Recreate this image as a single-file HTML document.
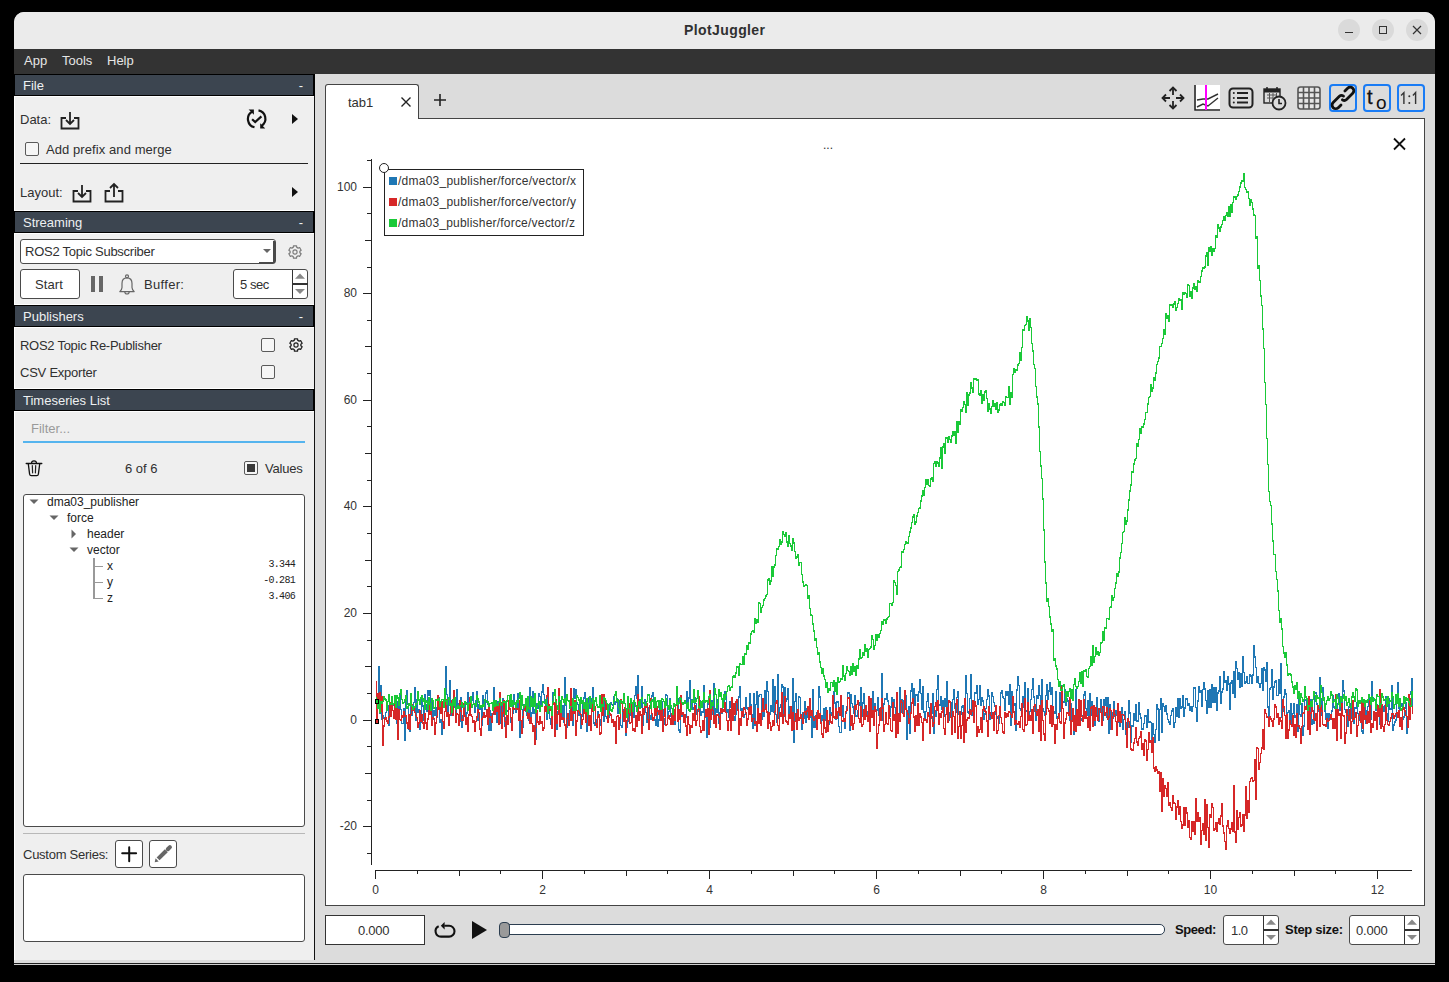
<!DOCTYPE html>
<html><head><meta charset="utf-8">
<style>
*{margin:0;padding:0;box-sizing:border-box}
html,body{width:1449px;height:982px;background:#000;overflow:hidden;font-family:"Liberation Sans",sans-serif;color:#303030}
.a{position:absolute}
.t{position:absolute;white-space:nowrap;line-height:1;font-size:13px}
.hdr{position:absolute;left:14px;width:301px;height:22px;background:#3c4550;border:1px solid #000;border-right-width:2px;color:#eef0f2;font-size:13px;line-height:21px;padding-left:8px}
.hdr span{position:absolute;right:10px;top:0}
.wl{position:absolute;left:14px;width:300px;height:1px;background:#fff}
.hdr span{position:absolute;right:10px;top:0}
.cb{position:absolute;width:14px;height:14px;border:1px solid #5a5a5a;border-radius:2px;background:#f6f6f6}
.box{position:absolute;background:#fff;border:1px solid #4a4a4a;border-radius:3px}
</style></head><body>
<!-- window -->
<div class="a" style="left:14px;top:12px;width:1421px;height:953px;background:#dcdcdc;border-radius:10px 10px 0 0;overflow:hidden">
  <div class="a" style="left:0;top:0;width:1421px;height:37px;background:#ebebeb"></div>
  <div class="a" style="left:0;top:37px;width:1421px;height:25px;background:#333"></div>
  <div class="a" style="left:0;top:62px;width:300px;height:1px;background:#8a8a8a"></div>
  <div class="a" style="left:0;top:62px;width:300px;height:886px;background:#efefef"></div>
  <div class="a" style="left:300px;top:62px;width:1px;height:886px;background:#111"></div>
  <div class="a" style="left:0;top:951px;width:1421px;height:1px;background:#1e1e1e"></div>
  <div class="a" style="left:0;top:952px;width:1421px;height:1px;background:#d0d0d0"></div>
</div>
<!-- title -->
<div class="t" style="left:684px;top:23px;font-size:14px;font-weight:bold;color:#303030;letter-spacing:0.4px">PlotJuggler</div>
<div class="a" style="left:1338px;top:19px;width:22px;height:22px;border-radius:50%;background:#dadada"></div>
<div class="a" style="left:1372px;top:19px;width:22px;height:22px;border-radius:50%;background:#dadada"></div>
<div class="a" style="left:1406px;top:19px;width:22px;height:22px;border-radius:50%;background:#dadada"></div>
<div class="a" style="left:1345px;top:32px;width:8px;height:1px;background:#333"></div>
<div class="a" style="left:1379px;top:26px;width:8px;height:8px;border:1px solid #333"></div>
<svg class="a" style="left:1411px;top:24px" width="12" height="12"><path d="M2 2L10 10M10 2L2 10" stroke="#333" stroke-width="1.2"/></svg>
<!-- menu -->
<div class="t" style="left:24px;top:54px;color:#e6e6e6">App</div>
<div class="t" style="left:62px;top:54px;color:#e6e6e6">Tools</div>
<div class="t" style="left:107px;top:54px;color:#e6e6e6">Help</div>

<!-- left dock -->
<div class="wl" style="top:96px"></div><div class="a" style="left:14px;top:96px;width:1px;height:864px;background:#fff"></div>
<div class="hdr" style="top:74px">File<span>-</span></div>
<div class="wl" style="top:210px"></div><div class="wl" style="top:233px"></div><div class="hdr" style="top:211px">Streaming<span>-</span></div>
<div class="wl" style="top:304px"></div><div class="wl" style="top:327px"></div><div class="hdr" style="top:305px">Publishers<span>-</span></div>
<div class="wl" style="top:388px"></div><div class="wl" style="top:411px"></div><div class="hdr" style="top:389px">Timeseries List</div>

<div class="t" style="left:20px;top:113px">Data:</div>
<svg class="a" style="left:60px;top:111px" width="20" height="19" viewBox="0 0 20 19" ><path d="M6 7H1.5V17.5H18.5V7H14" fill="none" stroke="#222" stroke-width="1.8"/><path d="M10 1V13M6 9L10 13L14 9" fill="none" stroke="#222" stroke-width="1.8"/></svg>
<svg class="a" style="left:246px;top:108px" width="22" height="22" viewBox="0 0 22 22" ><path d="M5.8 3.9A8.5 8.5 0 0 0 8.5 19.3" fill="none" stroke="#111" stroke-width="2.2"/><path d="M12.5 2.4A8.5 8.5 0 0 1 15.6 17.8" fill="none" stroke="#111" stroke-width="2.2"/><path d="M2.6 1.5H7.9V6.8Z" fill="#111"/><path d="M14.2 15.2V20.5H19.2Z" fill="#111"/><path d="M6.1 11.2L9.2 14.1L15.4 8.4" fill="none" stroke="#111" stroke-width="2.2"/></svg>
<svg class="a" style="left:291px;top:114px" width="8" height="10"><path d="M1 0L7 5L1 10Z" fill="#111"/></svg>
<div class="cb" style="left:25px;top:142px"></div>
<div class="t" style="left:46px;top:143px;letter-spacing:0.08px">Add prefix and merge</div>
<div class="a" style="left:20px;top:163px;width:288px;height:1px;background:#222"></div>
<div class="t" style="left:20px;top:186px">Layout:</div>
<svg class="a" style="left:72px;top:184px" width="20" height="19" viewBox="0 0 20 19" ><path d="M6 7H1.5V17.5H18.5V7H14" fill="none" stroke="#222" stroke-width="1.8"/><path d="M10 1V13M6 9L10 13L14 9" fill="none" stroke="#222" stroke-width="1.8"/></svg>
<svg class="a" style="left:104px;top:182px" width="20" height="21" viewBox="0 0 20 21" ><path d="M6 9H1.5V19.5H18.5V9H14" fill="none" stroke="#222" stroke-width="1.8"/><path d="M10 15V2M6 6L10 2L14 6" fill="none" stroke="#222" stroke-width="1.8"/></svg>
<svg class="a" style="left:291px;top:187px" width="8" height="10"><path d="M1 0L7 5L1 10Z" fill="#111"/></svg>

<!-- streaming -->
<div class="box" style="left:20px;top:239px;width:256px;height:25px"></div>
<div class="t" style="left:25px;top:245px;letter-spacing:-0.25px">ROS2 Topic Subscriber</div>
<svg class="a" style="left:263px;top:249px" width="8" height="4"><path d="M0 0H8L4 4Z" fill="#666"/></svg>
<div class="a" style="left:273px;top:241px;width:2px;height:22px;background:#4a4a4a"></div>
<div class="a" style="left:259px;top:262px;width:16px;height:1px;background:#4a4a4a"></div>
<svg class="a" style="left:286px;top:243px" width="18" height="18" viewBox="0 0 18 18" ><path d="M7.24 4.43L7.45 2.79L10.55 2.79L10.76 4.43A4.9 4.9 0 0 1 12.08 5.19L13.60 4.55L15.15 7.24L13.84 8.23A4.9 4.9 0 0 1 13.84 9.77L15.15 10.76L13.60 13.45L12.08 12.81A4.9 4.9 0 0 1 10.76 13.57L10.55 15.21L7.45 15.21L7.24 13.57A4.9 4.9 0 0 1 5.92 12.81L4.40 13.45L2.85 10.76L4.16 9.77A4.9 4.9 0 0 1 4.16 8.23L2.85 7.24L4.40 4.55L5.92 5.19A4.9 4.9 0 0 1 7.24 4.43Z" fill="none" stroke="#7a7a7a" stroke-width="1.2" stroke-linejoin="round"/><circle cx="9" cy="9" r="2.1" fill="none" stroke="#7a7a7a" stroke-width="1.1"/></svg>
<div class="box" style="left:20px;top:269px;width:60px;height:30px"></div>
<div class="t" style="left:35px;top:278px;letter-spacing:0.1px">Start</div>
<div class="a" style="left:91px;top:276px;width:4px;height:16px;background:#666"></div>
<div class="a" style="left:99px;top:276px;width:4px;height:16px;background:#666"></div>
<svg class="a" style="left:118px;top:272px" width="18" height="24" viewBox="0 0 18 24" ><circle cx="9" cy="4.3" r="1.5" fill="none" stroke="#666" stroke-width="1.2"/><path d="M9 5.8C5.5 5.8 4 8.5 4 11.5V15.5C4 17 3 18.5 1.8 19.6H16.2C15 18.5 14 17 14 15.5V11.5C14 8.5 12.5 5.8 9 5.8Z" fill="none" stroke="#666" stroke-width="1.2" stroke-linejoin="round"/><path d="M6.8 19.8A2.2 2.2 0 0 0 11.2 19.8" fill="none" stroke="#666" stroke-width="1.2"/></svg>
<div class="t" style="left:144px;top:278px;letter-spacing:0.31px">Buffer:</div>
<div class="box" style="left:233px;top:269px;width:75px;height:30px"></div>
<div class="t" style="left:240px;top:278px;letter-spacing:-0.45px">5 sec</div>

<!-- publishers -->
<div class="t" style="left:20px;top:339px;letter-spacing:-0.27px">ROS2 Topic Re-Publisher</div>
<div class="cb" style="left:261px;top:338px"></div>
<svg class="a" style="left:287px;top:336px" width="18" height="18" viewBox="0 0 18 18" ><path d="M7.24 4.43L7.45 2.79L10.55 2.79L10.76 4.43A4.9 4.9 0 0 1 12.08 5.19L13.60 4.55L15.15 7.24L13.84 8.23A4.9 4.9 0 0 1 13.84 9.77L15.15 10.76L13.60 13.45L12.08 12.81A4.9 4.9 0 0 1 10.76 13.57L10.55 15.21L7.45 15.21L7.24 13.57A4.9 4.9 0 0 1 5.92 12.81L4.40 13.45L2.85 10.76L4.16 9.77A4.9 4.9 0 0 1 4.16 8.23L2.85 7.24L4.40 4.55L5.92 5.19A4.9 4.9 0 0 1 7.24 4.43Z" fill="none" stroke="#222" stroke-width="1.3" stroke-linejoin="round"/><circle cx="9" cy="9" r="2.1" fill="none" stroke="#222" stroke-width="1.2"/></svg>
<div class="t" style="left:20px;top:366px;letter-spacing:-0.24px">CSV Exporter</div>
<div class="cb" style="left:261px;top:365px"></div>

<!-- timeseries -->
<div class="t" style="left:31px;top:422px;color:#9a9a9a">Filter...</div>
<div class="a" style="left:23px;top:441px;width:282px;height:2px;background:#55b4ee"></div>
<svg class="a" style="left:25px;top:458px" width="18" height="20" viewBox="0 0 18 20" ><path d="M1.2 5.5H16.8" stroke="#111" stroke-width="1.3" stroke-linecap="round"/><path d="M6.5 5.3A2.5 2.4 0 0 1 11.5 5.3" fill="none" stroke="#111" stroke-width="1.2"/><path d="M3.3 5.8L4.6 16.2Q4.9 17.6 6.2 17.6H11.8Q13.1 17.6 13.4 16.2L14.7 5.8" fill="none" stroke="#111" stroke-width="1.3"/><path d="M7.3 7.5L7.6 14.8M10.7 7.5L10.4 14.8" stroke="#222" stroke-width="1.2" stroke-linecap="round"/></svg>
<div class="t" style="left:125px;top:462px">6 of 6</div>
<div class="cb" style="left:244px;top:461px"></div>
<div class="a" style="left:247px;top:464px;width:8px;height:8px;background:#3a3a3a"></div>
<div class="t" style="left:265px;top:462px;letter-spacing:-0.23px">Values</div>
<div class="box" style="left:23px;top:494px;width:282px;height:333px"></div>
<div class="t" style="left:47px;top:496px;font-size:12px;color:#222">dma03_publisher</div>
<svg class="a" style="left:29px;top:499px" width="10" height="6" viewBox="0 0 10 6" ><path d="M0.5 0.5H9.5L5 5Z" fill="#666"/></svg>
<div class="t" style="left:67px;top:512px;font-size:12px;color:#222">force</div>
<svg class="a" style="left:49px;top:515px" width="10" height="6" viewBox="0 0 10 6" ><path d="M0.5 0.5H9.5L5 5Z" fill="#666"/></svg>
<div class="t" style="left:87px;top:528px;font-size:12px;color:#222">header</div>
<svg class="a" style="left:71px;top:529px" width="6" height="10" viewBox="0 0 6 10" ><path d="M0.5 0.5V9.5L5 5Z" fill="#666"/></svg>
<div class="t" style="left:87px;top:544px;font-size:12px;color:#222">vector</div>
<svg class="a" style="left:69px;top:547px" width="10" height="6" viewBox="0 0 10 6" ><path d="M0.5 0.5H9.5L5 5Z" fill="#666"/></svg>
<div class="t" style="left:107px;top:560px;font-size:12px;color:#222">x</div>
<div class="t" style="left:268.5px;top:560px;font-size:10px;letter-spacing:-0.7px;font-family:'Liberation Mono',monospace;color:#222">3.344</div>
<div class="t" style="left:107px;top:576px;font-size:12px;color:#222">y</div>
<div class="t" style="left:263.2px;top:576px;font-size:10px;letter-spacing:-0.7px;font-family:'Liberation Mono',monospace;color:#222">-0.281</div>
<div class="t" style="left:107px;top:592px;font-size:12px;color:#222">z</div>
<div class="t" style="left:268.5px;top:592px;font-size:10px;letter-spacing:-0.7px;font-family:'Liberation Mono',monospace;color:#222">3.406</div>
<div class="a" style="left:93px;top:558px;width:1.5px;height:40px;background:#999"></div>
<div class="a" style="left:93px;top:566px;width:10px;height:1px;background:#999"></div>
<div class="a" style="left:93px;top:582px;width:10px;height:1px;background:#999"></div>
<div class="a" style="left:93px;top:598px;width:10px;height:1px;background:#999"></div>
<div class="a" style="left:23px;top:833px;width:282px;height:1px;background:#b8b8b8"></div>
<div class="t" style="left:23px;top:848px;letter-spacing:-0.26px">Custom Series:</div>
<div class="box" style="left:115px;top:840px;width:28px;height:28px"></div>
<div class="box" style="left:149px;top:840px;width:28px;height:28px"></div>
<svg class="a" style="left:119px;top:844px" width="20" height="20" viewBox="0 0 20 20" ><path d="M10.2 3.2V17.3M3.2 9.3H17.1" stroke="#111" stroke-width="2" stroke-linecap="round"/></svg>
<svg class="a" style="left:153px;top:844px" width="20" height="20" viewBox="0 0 20 20" ><path d="M5.1 14.9L13.3 6.7" stroke="#666" stroke-width="4.1"/><path d="M14.8 5.2L16.9 3.1" stroke="#666" stroke-width="4.1" stroke-linecap="round"/><path d="M1.7 18.3L2.6 14.3L5.7 17.4Z" fill="#666"/></svg>
<div class="box" style="left:23px;top:874px;width:282px;height:68px"></div>

<!-- tabs -->
<div class="a" style="left:325px;top:118px;width:1100px;height:788px;background:#fff;border:1px solid #444"></div>
<div class="a" style="left:325px;top:84px;width:94px;height:35px;background:#fff;border:1px solid #444;border-bottom:none;border-radius:3px 3px 0 0"></div>
<div class="t" style="left:348px;top:96px">tab1</div>
<svg class="a" style="left:400px;top:96px" width="12" height="12"><path d="M1.5 1.5L10.5 10.5M10.5 1.5L1.5 10.5" stroke="#222" stroke-width="1.4"/></svg>
<svg class="a" style="left:433px;top:93px" width="14" height="14"><path d="M7 1V13M1 7H13" stroke="#222" stroke-width="1.6"/></svg>
<svg class="a" style="left:1160px;top:85px" width="26" height="26" viewBox="0 0 26 26" ><path d="M13 2.5V10M13 16V23.5M2.5 13H10M16 13H23.5" stroke="#222" stroke-width="1.8"/><path d="M9.5 6L13 2.5L16.5 6M9.5 20L13 23.5L16.5 20M6 9.5L2.5 13L6 16.5M20 9.5L23.5 13L20 16.5" fill="none" stroke="#222" stroke-width="1.8"/></svg>
<div class="a" style="left:1194px;top:85px;width:26px;height:26px;background:#fff"></div>
<svg class="a" style="left:1194px;top:85px" width="26" height="26" viewBox="0 0 26 26" ><path d="M1 0V25H26" fill="none" stroke="#222" stroke-width="1.6"/><path d="M3 15L9 14L14 14L24 9" fill="none" stroke="#333" stroke-width="1.4"/><path d="M3 22L9 19L14 21L24 13" fill="none" stroke="#333" stroke-width="1.4"/><path d="M12 0V25" stroke="#f0f" stroke-width="2"/></svg>
<svg class="a" style="left:1228px;top:87px" width="26" height="22" viewBox="0 0 26 22" ><rect x="1.5" y="1.5" width="23" height="19" rx="3.5" fill="none" stroke="#222" stroke-width="2"/><path d="M9 6H20M9 11H20M9 15.5H20" stroke="#222" stroke-width="2"/><circle cx="5.8" cy="6" r="1" fill="#222"/><circle cx="5.8" cy="11" r="1" fill="#222"/><circle cx="5.8" cy="15.5" r="1" fill="#222"/></svg>
<svg class="a" style="left:1263px;top:86px" width="24" height="25" viewBox="0 0 24 25" ><rect x="1" y="3" width="16" height="14" fill="none" stroke="#222" stroke-width="1.4"/><rect x="1" y="3" width="16" height="3.5" fill="#222"/><path d="M4 1V4M14 1V4" stroke="#222" stroke-width="1.5"/><path d="M4 9H14M4 12H10M6.5 7V16M10 7V14M13.5 7V11" stroke="#555" stroke-width="1"/><circle cx="16" cy="17" r="6.5" fill="#dcdcdc" stroke="#222" stroke-width="1.8"/><path d="M16 13V17.5H19" fill="none" stroke="#222" stroke-width="1.6"/></svg>
<svg class="a" style="left:1297px;top:86px" width="24" height="24" viewBox="0 0 24 24" ><rect x="1" y="1" width="22" height="22" rx="2.5" fill="#e6e6e6" stroke="#555" stroke-width="1.6"/><path d="M6.5 1V23M1 6.5H23" stroke="#555" stroke-width="1.6"/><path d="M12 1V23M1 12H23" stroke="#555" stroke-width="1.6"/><path d="M17.5 1V23M1 17.5H23" stroke="#555" stroke-width="1.6"/></svg>
<div class="a" style="left:1329px;top:84px;width:28px;height:28px;border:2px solid #1a7cf5;border-radius:4px"></div>
<div class="a" style="left:1363px;top:84px;width:28px;height:28px;border:2px solid #1a7cf5;border-radius:4px"></div>
<div class="a" style="left:1397px;top:84px;width:28px;height:28px;border:2px solid #1a7cf5;border-radius:4px"></div>
<svg class="a" style="left:1326px;top:80px" width="32" height="32" viewBox="0 0 32 32" ><path d="M18.9 11L21.65 8.25A3.6 3.6 0 0 1 26.75 13.35L20.5 19.6Q18.6 21.4 16.4 19.8" fill="none" stroke="#111" stroke-width="2.8" stroke-linecap="round"/><path d="M15 24.9L12.25 27.65A3.6 3.6 0 0 1 7.15 22.55L13.4 16.3Q15.3 14.5 17.5 16.1" fill="none" stroke="#111" stroke-width="2.8" stroke-linecap="round"/></svg>
<svg class="a" style="left:1363px;top:84px" width="28" height="28" viewBox="0 0 28 28" ><text x="4" y="19.5" font-family="Liberation Sans" font-size="20" fill="#111" stroke="#111" stroke-width="0.35">t</text><text x="13" y="24.5" font-family="Liberation Sans" font-size="19" fill="#111">o</text></svg>
<svg class="a" style="left:1397px;top:84px" width="28" height="28" viewBox="0 0 28 28" ><path d="M4.1 11.4L6.9 8.6V20M15.9 11.4L18.6 8.6V20" fill="none" stroke="#333" stroke-width="1.4"/><circle cx="12.3" cy="12.3" r="1" fill="#333"/><circle cx="12.3" cy="19" r="1" fill="#333"/></svg>

<!-- plot -->
<svg class="a" style="left:326px;top:119px" width="1098" height="786"><path d="M45.5 40V746" stroke="#222" stroke-width="1"/>
<path d="M49 751.5H1086" stroke="#222" stroke-width="1"/>
<path d="M41 734.5H45" stroke="#222" stroke-width="1"/>
<path d="M37 707.5H45" stroke="#222" stroke-width="1"/>
<path d="M41 681.5H45" stroke="#222" stroke-width="1"/>
<path d="M39 654.5H45" stroke="#222" stroke-width="1"/>
<path d="M41 627.5H45" stroke="#222" stroke-width="1"/>
<path d="M37 601.5H45" stroke="#222" stroke-width="1"/>
<path d="M41 574.5H45" stroke="#222" stroke-width="1"/>
<path d="M39 547.5H45" stroke="#222" stroke-width="1"/>
<path d="M41 521.5H45" stroke="#222" stroke-width="1"/>
<path d="M37 494.5H45" stroke="#222" stroke-width="1"/>
<path d="M41 467.5H45" stroke="#222" stroke-width="1"/>
<path d="M39 441.5H45" stroke="#222" stroke-width="1"/>
<path d="M41 414.5H45" stroke="#222" stroke-width="1"/>
<path d="M37 387.5H45" stroke="#222" stroke-width="1"/>
<path d="M41 361.5H45" stroke="#222" stroke-width="1"/>
<path d="M39 334.5H45" stroke="#222" stroke-width="1"/>
<path d="M41 307.5H45" stroke="#222" stroke-width="1"/>
<path d="M37 281.5H45" stroke="#222" stroke-width="1"/>
<path d="M41 254.5H45" stroke="#222" stroke-width="1"/>
<path d="M39 227.5H45" stroke="#222" stroke-width="1"/>
<path d="M41 201.5H45" stroke="#222" stroke-width="1"/>
<path d="M37 174.5H45" stroke="#222" stroke-width="1"/>
<path d="M41 148.5H45" stroke="#222" stroke-width="1"/>
<path d="M39 121.5H45" stroke="#222" stroke-width="1"/>
<path d="M41 94.5H45" stroke="#222" stroke-width="1"/>
<path d="M37 68.5H45" stroke="#222" stroke-width="1"/>
<path d="M41 41.5H45" stroke="#222" stroke-width="1"/>
<path d="M49.5 751V760" stroke="#222" stroke-width="1"/>
<path d="M91.5 751V755" stroke="#222" stroke-width="1"/>
<path d="M133.5 751V757" stroke="#222" stroke-width="1"/>
<path d="M174.5 751V755" stroke="#222" stroke-width="1"/>
<path d="M216.5 751V760" stroke="#222" stroke-width="1"/>
<path d="M258.5 751V755" stroke="#222" stroke-width="1"/>
<path d="M300.5 751V757" stroke="#222" stroke-width="1"/>
<path d="M341.5 751V755" stroke="#222" stroke-width="1"/>
<path d="M383.5 751V760" stroke="#222" stroke-width="1"/>
<path d="M425.5 751V755" stroke="#222" stroke-width="1"/>
<path d="M467.5 751V757" stroke="#222" stroke-width="1"/>
<path d="M508.5 751V755" stroke="#222" stroke-width="1"/>
<path d="M550.5 751V760" stroke="#222" stroke-width="1"/>
<path d="M592.5 751V755" stroke="#222" stroke-width="1"/>
<path d="M634.5 751V757" stroke="#222" stroke-width="1"/>
<path d="M675.5 751V755" stroke="#222" stroke-width="1"/>
<path d="M717.5 751V760" stroke="#222" stroke-width="1"/>
<path d="M759.5 751V755" stroke="#222" stroke-width="1"/>
<path d="M801.5 751V757" stroke="#222" stroke-width="1"/>
<path d="M842.5 751V755" stroke="#222" stroke-width="1"/>
<path d="M884.5 751V760" stroke="#222" stroke-width="1"/>
<path d="M926.5 751V755" stroke="#222" stroke-width="1"/>
<path d="M968.5 751V757" stroke="#222" stroke-width="1"/>
<path d="M1009.5 751V755" stroke="#222" stroke-width="1"/>
<path d="M1051.5 751V760" stroke="#222" stroke-width="1"/>
<polyline points="49.5,596.1 50.5,596.1 50.5,592.4 51.5,592.4 51.5,589.4 52.5,589.4 52.5,547.6 53.5,547.6 53.5,594.7 54.5,594.7 54.5,566.6 55.5,566.6 55.5,600.0 56.5,600.0 56.5,596.7 57.5,596.7 57.5,599.1 58.5,599.1 58.5,599.1 59.5,599.1 59.5,593.3 60.5,593.3 60.5,584.1 61.5,584.1 61.5,586.6 62.5,586.6 62.5,606.6 63.5,606.6 63.5,583.6 64.5,583.6 64.5,587.5 65.5,587.5 65.5,582.0 66.5,582.0 66.5,584.3 67.5,584.3 67.5,586.6 68.5,586.6 68.5,592.8 69.5,592.8 69.5,586.8 70.5,586.8 70.5,604.7 71.5,604.7 71.5,583.2 72.5,583.2 72.5,591.0 73.5,591.0 73.5,575.2 74.5,575.2 74.5,590.6 75.5,590.6 75.5,604.4 76.5,604.4 76.5,604.4 77.5,604.4 77.5,589.5 78.5,589.5 78.5,621.0 79.5,621.0 79.5,579.1 80.5,579.1 80.5,572.2 81.5,572.2 81.5,585.3 82.5,585.3 82.5,609.9 83.5,609.9 83.5,612.4 84.5,612.4 84.5,576.6 85.5,576.6 85.5,596.3 86.5,596.3 86.5,590.0 87.5,590.0 87.5,583.5 88.5,583.5 88.5,568.6 89.5,568.6 89.5,601.3 90.5,601.3 90.5,580.5 91.5,580.5 91.5,593.3 92.5,593.3 92.5,590.9 93.5,590.9 93.5,610.6 94.5,610.6 94.5,602.9 95.5,602.9 95.5,577.3 96.5,577.3 96.5,587.1 97.5,587.1 97.5,601.4 98.5,601.4 98.5,575.3 99.5,575.3 99.5,585.7 100.5,585.7 100.5,592.5 101.5,592.5 101.5,572.2 102.5,572.2 102.5,576.4 103.5,576.4 103.5,571.3 104.5,571.3 104.5,593.2 105.5,593.2 105.5,583.8 106.5,583.8 106.5,600.2 107.5,600.2 107.5,591.3 108.5,591.3 108.5,596.3 109.5,596.3 109.5,589.1 110.5,589.1 110.5,598.3 111.5,598.3 111.5,588.9 112.5,588.9 112.5,579.2 113.5,579.2 113.5,603.0 114.5,603.0 114.5,600.8 115.5,600.8 115.5,614.9 116.5,614.9 116.5,588.4 117.5,588.4 117.5,583.6 118.5,583.6 118.5,574.1 119.5,574.1 119.5,547.5 120.5,547.5 120.5,575.6 121.5,575.6 121.5,595.4 122.5,595.4 122.5,580.3 123.5,580.3 123.5,561.5 124.5,561.5 124.5,596.7 125.5,596.7 125.5,583.5 126.5,583.5 126.5,586.0 127.5,586.0 127.5,585.3 128.5,585.3 128.5,588.5 129.5,588.5 129.5,595.2 130.5,595.2 130.5,570.9 131.5,570.9 131.5,587.5 132.5,587.5 132.5,584.4 133.5,584.4 133.5,602.5 134.5,602.5 134.5,578.6 135.5,578.6 135.5,608.0 136.5,608.0 136.5,596.7 137.5,596.7 137.5,590.1 138.5,590.1 138.5,582.3 139.5,582.3 139.5,598.9 140.5,598.9 140.5,594.0 141.5,594.0 141.5,573.5 142.5,573.5 142.5,587.1 143.5,587.1 143.5,585.0 144.5,585.0 144.5,579.4 145.5,579.4 145.5,581.6 146.5,581.6 146.5,574.2 147.5,574.2 147.5,584.9 148.5,584.9 148.5,593.7 149.5,593.7 149.5,581.4 150.5,581.4 150.5,572.8 151.5,572.8 151.5,601.5 152.5,601.5 152.5,585.9 153.5,585.9 153.5,590.3 154.5,590.3 154.5,587.4 155.5,587.4 155.5,605.8 156.5,605.8 156.5,577.2 157.5,577.2 157.5,584.2 158.5,584.2 158.5,590.3 159.5,590.3 159.5,574.1 160.5,574.1 160.5,572.0 161.5,572.0 161.5,585.7 162.5,585.7 162.5,611.0 163.5,611.0 163.5,592.0 164.5,592.0 164.5,611.3 165.5,611.3 165.5,595.0 166.5,595.0 166.5,595.0 167.5,595.0 167.5,569.1 168.5,569.1 168.5,589.8 169.5,589.8 169.5,589.6 170.5,589.6 170.5,603.0 171.5,603.0 171.5,583.1 172.5,583.1 172.5,584.8 173.5,584.8 173.5,604.7 174.5,604.7 174.5,584.3 175.5,584.3 175.5,600.1 176.5,600.1 176.5,580.0 177.5,580.0 177.5,596.9 178.5,596.9 178.5,606.8 179.5,606.8 179.5,599.2 180.5,599.2 180.5,592.7 181.5,592.7 181.5,591.5 182.5,591.5 182.5,589.1 183.5,589.1 183.5,589.7 184.5,589.7 184.5,603.0 185.5,603.0 185.5,602.7 186.5,602.7 186.5,594.5 187.5,594.5 187.5,576.1 188.5,576.1 188.5,584.3 189.5,584.3 189.5,593.3 190.5,593.3 190.5,590.6 191.5,590.6 191.5,575.1 192.5,575.1 192.5,597.3 193.5,597.3 193.5,618.6 194.5,618.6 194.5,576.5 195.5,576.5 195.5,590.7 196.5,590.7 196.5,607.8 197.5,607.8 197.5,585.4 198.5,585.4 198.5,585.5 199.5,585.5 199.5,591.9 200.5,591.9 200.5,596.2 201.5,596.2 201.5,585.5 202.5,585.5 202.5,600.8 203.5,600.8 203.5,569.0 204.5,569.0 204.5,597.2 205.5,597.2 205.5,594.1 206.5,594.1 206.5,572.7 207.5,572.7 207.5,594.3 208.5,594.3 208.5,590.5 209.5,590.5 209.5,620.3 210.5,620.3 210.5,584.9 211.5,584.9 211.5,589.5 212.5,589.5 212.5,574.7 213.5,574.7 213.5,577.6 214.5,577.6 214.5,587.3 215.5,587.3 215.5,572.9 216.5,572.9 216.5,565.7 217.5,565.7 217.5,575.4 218.5,575.4 218.5,584.6 219.5,584.6 219.5,591.3 220.5,591.3 220.5,600.4 221.5,600.4 221.5,568.7 222.5,568.7 222.5,587.8 223.5,587.8 223.5,599.5 224.5,599.5 224.5,605.2 225.5,605.2 225.5,605.5 226.5,605.5 226.5,574.2 227.5,574.2 227.5,584.4 228.5,584.4 228.5,596.2 229.5,596.2 229.5,600.3 230.5,600.3 230.5,610.1 231.5,610.1 231.5,592.9 232.5,592.9 232.5,592.7 233.5,592.7 233.5,581.6 234.5,581.6 234.5,591.8 235.5,591.8 235.5,598.9 236.5,598.9 236.5,586.3 237.5,586.3 237.5,602.9 238.5,602.9 238.5,558.7 239.5,558.7 239.5,586.4 240.5,586.4 240.5,608.7 241.5,608.7 241.5,599.6 242.5,599.6 242.5,605.9 243.5,605.9 243.5,591.6 244.5,591.6 244.5,577.0 245.5,577.0 245.5,584.4 246.5,584.4 246.5,606.7 247.5,606.7 247.5,569.8 248.5,569.8 248.5,579.5 249.5,579.5 249.5,571.1 250.5,571.1 250.5,584.1 251.5,584.1 251.5,585.4 252.5,585.4 252.5,596.4 253.5,596.4 253.5,580.9 254.5,580.9 254.5,608.8 255.5,608.8 255.5,597.1 256.5,597.1 256.5,584.8 257.5,584.8 257.5,579.1 258.5,579.1 258.5,573.5 259.5,573.5 259.5,591.4 260.5,591.4 260.5,611.8 261.5,611.8 261.5,588.2 262.5,588.2 262.5,578.7 263.5,578.7 263.5,589.4 264.5,589.4 264.5,584.3 265.5,584.3 265.5,580.1 266.5,580.1 266.5,569.2 267.5,569.2 267.5,603.8 268.5,603.8 268.5,606.4 269.5,606.4 269.5,603.5 270.5,603.5 270.5,600.9 271.5,600.9 271.5,592.4 272.5,592.4 272.5,595.3 273.5,595.3 273.5,601.2 274.5,601.2 274.5,606.3 275.5,606.3 275.5,593.2 276.5,593.2 276.5,585.7 277.5,585.7 277.5,602.5 278.5,602.5 278.5,579.9 279.5,579.9 279.5,597.6 280.5,597.6 280.5,599.5 281.5,599.5 281.5,599.3 282.5,599.3 282.5,597.9 283.5,597.9 283.5,585.0 284.5,585.0 284.5,583.9 285.5,583.9 285.5,585.6 286.5,585.6 286.5,586.0 287.5,586.0 287.5,577.7 288.5,577.7 288.5,585.2 289.5,585.2 289.5,583.1 290.5,583.1 290.5,579.7 291.5,579.7 291.5,594.1 292.5,594.1 292.5,581.8 293.5,581.8 293.5,592.9 294.5,592.9 294.5,606.4 295.5,606.4 295.5,608.7 296.5,608.7 296.5,590.4 297.5,590.4 297.5,601.4 298.5,601.4 298.5,592.9 299.5,592.9 299.5,616.5 300.5,616.5 300.5,608.3 301.5,608.3 301.5,602.5 302.5,602.5 302.5,588.5 303.5,588.5 303.5,587.4 304.5,587.4 304.5,596.2 305.5,596.2 305.5,589.8 306.5,589.8 306.5,587.5 307.5,587.5 307.5,597.9 308.5,597.9 308.5,576.4 309.5,576.4 309.5,568.1 310.5,568.1 310.5,579.0 311.5,579.0 311.5,556.7 312.5,556.7 312.5,589.3 313.5,589.3 313.5,580.5 314.5,580.5 314.5,588.0 315.5,588.0 315.5,567.8 316.5,567.8 316.5,606.4 317.5,606.4 317.5,594.5 318.5,594.5 318.5,580.6 319.5,580.6 319.5,593.6 320.5,593.6 320.5,603.7 321.5,603.7 321.5,599.4 322.5,599.4 322.5,589.1 323.5,589.1 323.5,596.9 324.5,596.9 324.5,599.9 325.5,599.9 325.5,576.8 326.5,576.8 326.5,574.2 327.5,574.2 327.5,583.6 328.5,583.6 328.5,601.0 329.5,601.0 329.5,606.5 330.5,606.5 330.5,591.6 331.5,591.6 331.5,606.8 332.5,606.8 332.5,601.2 333.5,601.2 333.5,589.3 334.5,589.3 334.5,581.9 335.5,581.9 335.5,583.0 336.5,583.0 336.5,591.0 337.5,591.0 337.5,605.7 338.5,605.7 338.5,599.4 339.5,599.4 339.5,575.7 340.5,575.7 340.5,576.5 341.5,576.5 341.5,599.1 342.5,599.1 342.5,592.3 343.5,592.3 343.5,579.7 344.5,579.7 344.5,597.6 345.5,597.6 345.5,605.3 346.5,605.3 346.5,599.0 347.5,599.0 347.5,591.3 348.5,591.3 348.5,605.0 349.5,605.0 349.5,585.9 350.5,585.9 350.5,583.6 351.5,583.6 351.5,580.0 352.5,580.0 352.5,611.1 353.5,611.1 353.5,613.7 354.5,613.7 354.5,589.7 355.5,589.7 355.5,596.8 356.5,596.8 356.5,595.2 357.5,595.2 357.5,600.6 358.5,600.6 358.5,603.4 359.5,603.4 359.5,597.8 360.5,597.8 360.5,572.9 361.5,572.9 361.5,584.5 362.5,584.5 362.5,578.9 363.5,578.9 363.5,561.3 364.5,561.3 364.5,589.2 365.5,589.2 365.5,581.0 366.5,581.0 366.5,590.6 367.5,590.6 367.5,589.1 368.5,589.1 368.5,578.9 369.5,578.9 369.5,584.7 370.5,584.7 370.5,594.8 371.5,594.8 371.5,592.1 372.5,592.1 372.5,580.5 373.5,580.5 373.5,581.9 374.5,581.9 374.5,596.5 375.5,596.5 375.5,592.8 376.5,592.8 376.5,593.6 377.5,593.6 377.5,566.7 378.5,566.7 378.5,598.4 379.5,598.4 379.5,591.3 380.5,591.3 380.5,618.1 381.5,618.1 381.5,585.0 382.5,585.0 382.5,582.4 383.5,582.4 383.5,608.4 384.5,608.4 384.5,589.4 385.5,589.4 385.5,581.5 386.5,581.5 386.5,594.9 387.5,594.9 387.5,564.5 388.5,564.5 388.5,595.0 389.5,595.0 389.5,590.2 390.5,590.2 390.5,593.0 391.5,593.0 391.5,581.1 392.5,581.1 392.5,604.5 393.5,604.5 393.5,593.4 394.5,593.4 394.5,589.7 395.5,589.7 395.5,593.9 396.5,593.9 396.5,580.6 397.5,580.6 397.5,588.4 398.5,588.4 398.5,573.2 399.5,573.2 399.5,577.6 400.5,577.6 400.5,593.0 401.5,593.0 401.5,591.0 402.5,591.0 402.5,597.8 403.5,597.8 403.5,582.3 404.5,582.3 404.5,588.4 405.5,588.4 405.5,582.0 406.5,582.0 406.5,592.3 407.5,592.3 407.5,598.1 408.5,598.1 408.5,601.2 409.5,601.2 409.5,595.7 410.5,595.7 410.5,580.7 411.5,580.7 411.5,591.7 412.5,591.7 412.5,577.9 413.5,577.9 413.5,568.1 414.5,568.1 414.5,591.2 415.5,591.2 415.5,590.1 416.5,590.1 416.5,597.4 417.5,597.4 417.5,598.2 418.5,598.2 418.5,595.5 419.5,595.5 419.5,579.1 420.5,579.1 420.5,589.0 421.5,589.0 421.5,589.8 422.5,589.8 422.5,593.5 423.5,593.5 423.5,574.5 424.5,574.5 424.5,586.1 425.5,586.1 425.5,595.9 426.5,595.9 426.5,609.7 427.5,609.7 427.5,575.0 428.5,575.0 428.5,606.6 429.5,606.6 429.5,585.6 430.5,585.6 430.5,572.8 431.5,572.8 431.5,603.3 432.5,603.3 432.5,576.9 433.5,576.9 433.5,575.7 434.5,575.7 434.5,575.5 435.5,575.5 435.5,599.9 436.5,599.9 436.5,589.2 437.5,589.2 437.5,597.3 438.5,597.3 438.5,572.0 439.5,572.0 439.5,589.6 440.5,589.6 440.5,562.6 441.5,562.6 441.5,572.3 442.5,572.3 442.5,599.9 443.5,599.9 443.5,595.0 444.5,595.0 444.5,586.7 445.5,586.7 445.5,592.7 446.5,592.7 446.5,560.7 447.5,560.7 447.5,593.3 448.5,593.3 448.5,568.1 449.5,568.1 449.5,595.7 450.5,595.7 450.5,603.0 451.5,603.0 451.5,556.2 452.5,556.2 452.5,599.2 453.5,599.2 453.5,588.3 454.5,588.3 454.5,586.1 455.5,586.1 455.5,566.1 456.5,566.1 456.5,568.1 457.5,568.1 457.5,597.3 458.5,597.3 458.5,568.8 459.5,568.8 459.5,582.4 460.5,582.4 460.5,579.9 461.5,579.9 461.5,569.7 462.5,569.7 462.5,599.1 463.5,599.1 463.5,587.8 464.5,587.8 464.5,588.0 465.5,588.0 465.5,598.3 466.5,598.3 466.5,560.2 467.5,560.2 467.5,623.4 468.5,623.4 468.5,582.7 469.5,582.7 469.5,575.1 470.5,575.1 470.5,595.0 471.5,595.0 471.5,592.4 472.5,592.4 472.5,577.8 473.5,577.8 473.5,578.6 474.5,578.6 474.5,597.9 475.5,597.9 475.5,610.6 476.5,610.6 476.5,593.7 477.5,593.7 477.5,598.9 478.5,598.9 478.5,582.8 479.5,582.8 479.5,603.5 480.5,603.5 480.5,590.2 481.5,590.2 481.5,597.9 482.5,597.9 482.5,596.1 483.5,596.1 483.5,598.6 484.5,598.6 484.5,593.6 485.5,593.6 485.5,617.9 486.5,617.9 486.5,570.4 487.5,570.4 487.5,607.9 488.5,607.9 488.5,598.2 489.5,598.2 489.5,608.6 490.5,608.6 490.5,594.2 491.5,594.2 491.5,597.0 492.5,597.0 492.5,567.5 493.5,567.5 493.5,578.0 494.5,578.0 494.5,603.7 495.5,603.7 495.5,597.0 496.5,597.0 496.5,601.0 497.5,601.0 497.5,589.8 498.5,589.8 498.5,601.4 499.5,601.4 499.5,589.0 500.5,589.0 500.5,592.5 501.5,592.5 501.5,606.6 502.5,606.6 502.5,605.2 503.5,605.2 503.5,588.8 504.5,588.8 504.5,594.2 505.5,594.2 505.5,596.4 506.5,596.4 506.5,592.4 507.5,592.4 507.5,572.4 508.5,572.4 508.5,583.8 509.5,583.8 509.5,600.2 510.5,600.2 510.5,582.4 511.5,582.4 511.5,583.1 512.5,583.1 512.5,607.5 513.5,607.5 513.5,613.5 514.5,613.5 514.5,613.5 515.5,613.5 515.5,597.0 516.5,597.0 516.5,587.1 517.5,587.1 517.5,601.0 518.5,601.0 518.5,609.7 519.5,609.7 519.5,593.8 520.5,593.8 520.5,588.0 521.5,588.0 521.5,574.0 522.5,574.0 522.5,573.6 523.5,573.6 523.5,610.8 524.5,610.8 524.5,575.7 525.5,575.7 525.5,584.3 526.5,584.3 526.5,588.2 527.5,588.2 527.5,594.0 528.5,594.0 528.5,577.0 529.5,577.0 529.5,597.3 530.5,597.3 530.5,597.2 531.5,597.2 531.5,591.5 532.5,591.5 532.5,583.8 533.5,583.8 533.5,586.4 534.5,586.4 534.5,569.1 535.5,569.1 535.5,597.0 536.5,597.0 536.5,584.2 537.5,584.2 537.5,574.8 538.5,574.8 538.5,589.2 539.5,589.2 539.5,594.9 540.5,594.9 540.5,593.2 541.5,593.2 541.5,596.0 542.5,596.0 542.5,601.8 543.5,601.8 543.5,583.1 544.5,583.1 544.5,590.7 545.5,590.7 545.5,591.3 546.5,591.3 546.5,572.4 547.5,572.4 547.5,600.1 548.5,600.1 548.5,584.4 549.5,584.4 549.5,590.6 550.5,590.6 550.5,591.0 551.5,591.0 551.5,578.6 552.5,578.6 552.5,596.4 553.5,596.4 553.5,597.9 554.5,597.9 554.5,589.0 555.5,589.0 555.5,555.2 556.5,555.2 556.5,601.7 557.5,601.7 557.5,585.0 558.5,585.0 558.5,579.4 559.5,579.4 559.5,579.9 560.5,579.9 560.5,574.3 561.5,574.3 561.5,582.0 562.5,582.0 562.5,592.7 563.5,592.7 563.5,597.0 564.5,597.0 564.5,587.9 565.5,587.9 565.5,579.0 566.5,579.0 566.5,582.5 567.5,582.5 567.5,581.1 568.5,581.1 568.5,588.4 569.5,588.4 569.5,596.0 570.5,596.0 570.5,584.6 571.5,584.6 571.5,594.5 572.5,594.5 572.5,600.8 573.5,600.8 573.5,568.5 574.5,568.5 574.5,592.8 575.5,592.8 575.5,580.8 576.5,580.8 576.5,581.9 577.5,581.9 577.5,594.5 578.5,594.5 578.5,581.1 579.5,581.1 579.5,576.6 580.5,576.6 580.5,620.5 581.5,620.5 581.5,594.8 582.5,594.8 582.5,587.7 583.5,587.7 583.5,614.1 584.5,614.1 584.5,572.2 585.5,572.2 585.5,565.0 586.5,565.0 586.5,580.4 587.5,580.4 587.5,570.1 588.5,570.1 588.5,586.5 589.5,586.5 589.5,575.9 590.5,575.9 590.5,575.6 591.5,575.6 591.5,582.1 592.5,582.1 592.5,572.8 593.5,572.8 593.5,561.1 594.5,561.1 594.5,574.3 595.5,574.3 595.5,590.1 596.5,590.1 596.5,567.3 597.5,567.3 597.5,592.9 598.5,592.9 598.5,601.2 599.5,601.2 599.5,592.5 600.5,592.5 600.5,582.4 601.5,582.4 601.5,574.9 602.5,574.9 602.5,588.3 603.5,588.3 603.5,601.0 604.5,601.0 604.5,599.1 605.5,599.1 605.5,593.9 606.5,593.9 606.5,574.9 607.5,574.9 607.5,613.8 608.5,613.8 608.5,591.7 609.5,591.7 609.5,597.5 610.5,597.5 610.5,570.3 611.5,570.3 611.5,556.5 612.5,556.5 612.5,586.0 613.5,586.0 613.5,585.9 614.5,585.9 614.5,578.0 615.5,578.0 615.5,590.3 616.5,590.3 616.5,581.7 617.5,581.7 617.5,597.2 618.5,597.2 618.5,579.8 619.5,579.8 619.5,587.5 620.5,587.5 620.5,562.4 621.5,562.4 621.5,587.7 622.5,587.7 622.5,601.6 623.5,601.6 623.5,593.5 624.5,593.5 624.5,584.0 625.5,584.0 625.5,599.5 626.5,599.5 626.5,580.3 627.5,580.3 627.5,570.5 628.5,570.5 628.5,589.0 629.5,589.0 629.5,592.8 630.5,592.8 630.5,578.4 631.5,578.4 631.5,572.5 632.5,572.5 632.5,595.1 633.5,595.1 633.5,598.5 634.5,598.5 634.5,595.0 635.5,595.0 635.5,587.8 636.5,587.8 636.5,586.7 637.5,586.7 637.5,604.6 638.5,604.6 638.5,595.3 639.5,595.3 639.5,556.8 640.5,556.8 640.5,574.5 641.5,574.5 641.5,593.1 642.5,593.1 642.5,594.2 643.5,594.2 643.5,579.3 644.5,579.3 644.5,555.9 645.5,555.9 645.5,596.4 646.5,596.4 646.5,582.3 647.5,582.3 647.5,594.8 648.5,594.8 648.5,573.4 649.5,573.4 649.5,574.6 650.5,574.6 650.5,566.5 651.5,566.5 651.5,584.8 652.5,584.8 652.5,580.7 653.5,580.7 653.5,566.6 654.5,566.6 654.5,586.6 655.5,586.6 655.5,579.0 656.5,579.0 656.5,582.2 657.5,582.2 657.5,599.9 658.5,599.9 658.5,595.1 659.5,595.1 659.5,589.7 660.5,589.7 660.5,580.6 661.5,580.6 661.5,571.1 662.5,571.1 662.5,576.8 663.5,576.8 663.5,599.8 664.5,599.8 664.5,597.6 665.5,597.6 665.5,573.5 666.5,573.5 666.5,577.6 667.5,577.6 667.5,583.4 668.5,583.4 668.5,587.6 669.5,587.6 669.5,595.1 670.5,595.1 670.5,597.7 671.5,597.7 671.5,599.2 672.5,599.2 672.5,604.1 673.5,604.1 673.5,590.2 674.5,590.2 674.5,574.1 675.5,574.1 675.5,571.9 676.5,571.9 676.5,577.9 677.5,577.9 677.5,579.6 678.5,579.6 678.5,590.9 679.5,590.9 679.5,573.2 680.5,573.2 680.5,575.8 681.5,575.8 681.5,572.6 682.5,572.6 682.5,584.8 683.5,584.8 683.5,565.8 684.5,565.8 684.5,606.3 685.5,606.3 685.5,572.8 686.5,572.8 686.5,579.0 687.5,579.0 687.5,586.0 688.5,586.0 688.5,584.5 689.5,584.5 689.5,611.6 690.5,611.6 690.5,571.0 691.5,571.0 691.5,558.0 692.5,558.0 692.5,566.4 693.5,566.4 693.5,589.7 694.5,589.7 694.5,591.2 695.5,591.2 695.5,591.7 696.5,591.7 696.5,577.9 697.5,577.9 697.5,588.4 698.5,588.4 698.5,563.3 699.5,563.3 699.5,591.4 700.5,591.4 700.5,592.7 701.5,592.7 701.5,570.0 702.5,570.0 702.5,594.8 703.5,594.8 703.5,592.6 704.5,592.6 704.5,580.6 705.5,580.6 705.5,570.5 706.5,570.5 706.5,559.8 707.5,559.8 707.5,578.0 708.5,578.0 708.5,592.4 709.5,592.4 709.5,601.5 710.5,601.5 710.5,577.0 711.5,577.0 711.5,579.3 712.5,579.3 712.5,566.7 713.5,566.7 713.5,576.3 714.5,576.3 714.5,587.4 715.5,587.4 715.5,560.3 716.5,560.3 716.5,590.1 717.5,590.1 717.5,592.5 718.5,592.5 718.5,596.1 719.5,596.1 719.5,576.7 720.5,576.7 720.5,565.9 721.5,565.9 721.5,580.2 722.5,580.2 722.5,572.1 723.5,572.1 723.5,564.2 724.5,564.2 724.5,575.4 725.5,575.4 725.5,568.6 726.5,568.6 726.5,605.2 727.5,605.2 727.5,592.4 728.5,592.4 728.5,594.0 729.5,594.0 729.5,572.3 730.5,572.3 730.5,599.7 731.5,599.7 731.5,597.5 732.5,597.5 732.5,594.3 733.5,594.3 733.5,573.9 734.5,573.9 734.5,592.1 735.5,592.1 735.5,567.0 736.5,567.0 736.5,583.7 737.5,583.7 737.5,583.0 738.5,583.0 738.5,570.8 739.5,570.8 739.5,586.3 740.5,586.3 740.5,579.9 741.5,579.9 741.5,582.0 742.5,582.0 742.5,594.6 743.5,594.6 743.5,600.8 744.5,600.8 744.5,584.6 745.5,584.6 745.5,601.0 746.5,601.0 746.5,598.1 747.5,598.1 747.5,615.0 748.5,615.0 748.5,604.8 749.5,604.8 749.5,571.0 750.5,571.0 750.5,602.3 751.5,602.3 751.5,592.0 752.5,592.0 752.5,583.7 753.5,583.7 753.5,586.3 754.5,586.3 754.5,599.5 755.5,599.5 755.5,601.7 756.5,601.7 756.5,596.5 757.5,596.5 757.5,576.1 758.5,576.1 758.5,572.9 759.5,572.9 759.5,589.7 760.5,589.7 760.5,596.5 761.5,596.5 761.5,582.2 762.5,582.2 762.5,599.7 763.5,599.7 763.5,574.6 764.5,574.6 764.5,595.9 765.5,595.9 765.5,582.5 766.5,582.5 766.5,604.8 767.5,604.8 767.5,602.1 768.5,602.1 768.5,606.6 769.5,606.6 769.5,596.1 770.5,596.1 770.5,578.4 771.5,578.4 771.5,596.7 772.5,596.7 772.5,602.3 773.5,602.3 773.5,591.5 774.5,591.5 774.5,580.8 775.5,580.8 775.5,599.7 776.5,599.7 776.5,600.9 777.5,600.9 777.5,580.4 778.5,580.4 778.5,586.4 779.5,586.4 779.5,578.8 780.5,578.8 780.5,598.5 781.5,598.5 781.5,579.2 782.5,579.2 782.5,614.5 783.5,614.5 783.5,585.6 784.5,585.6 784.5,610.5 785.5,610.5 785.5,593.8 786.5,593.8 786.5,599.4 787.5,599.4 787.5,583.1 788.5,583.1 788.5,597.2 789.5,597.2 789.5,591.4 790.5,591.4 790.5,596.3 791.5,596.3 791.5,599.8 792.5,599.8 792.5,603.3 793.5,603.3 793.5,607.4 794.5,607.4 794.5,598.3 795.5,598.3 795.5,589.0 796.5,589.0 796.5,610.4 797.5,610.4 797.5,600.3 798.5,600.3 798.5,593.0 799.5,593.0 799.5,615.0 800.5,615.0 800.5,603.4 801.5,603.4 801.5,608.4 802.5,608.4 802.5,582.2 803.5,582.2 803.5,594.2 804.5,594.2 804.5,623.4 805.5,623.4 805.5,607.1 806.5,607.1 806.5,607.1 807.5,607.1 807.5,594.3 808.5,594.3 808.5,600.8 809.5,600.8 809.5,586.1 810.5,586.1 810.5,602.1 811.5,602.1 811.5,601.9 812.5,601.9 812.5,584.1 813.5,584.1 813.5,594.9 814.5,594.9 814.5,599.0 815.5,599.0 815.5,610.4 816.5,610.4 816.5,610.1 817.5,610.1 817.5,604.5 818.5,604.5 818.5,597.0 819.5,597.0 819.5,597.2 820.5,597.2 820.5,608.2 821.5,608.2 821.5,590.9 822.5,590.9 822.5,603.5 823.5,603.5 823.5,602.8 824.5,602.8 824.5,603.7 825.5,603.7 825.5,624.9 826.5,624.9 826.5,605.0 827.5,605.0 827.5,615.5 828.5,615.5 828.5,623.0 829.5,623.0 829.5,610.6 830.5,610.6 830.5,586.1 831.5,586.1 831.5,590.2 832.5,590.2 832.5,621.1 833.5,621.1 833.5,590.7 834.5,590.7 834.5,579.9 835.5,579.9 835.5,613.4 836.5,613.4 836.5,585.1 837.5,585.1 837.5,587.5 838.5,587.5 838.5,592.2 839.5,592.2 839.5,586.5 840.5,586.5 840.5,595.1 841.5,595.1 841.5,600.5 842.5,600.5 842.5,603.1 843.5,603.1 843.5,605.5 844.5,605.5 844.5,596.4 845.5,596.4 845.5,591.8 846.5,591.8 846.5,589.8 847.5,589.8 847.5,608.4 848.5,608.4 848.5,603.7 849.5,603.7 849.5,589.2 850.5,589.2 850.5,596.8 851.5,596.8 851.5,580.0 852.5,580.0 852.5,597.8 853.5,597.8 853.5,580.0 854.5,580.0 854.5,589.7 855.5,589.7 855.5,588.2 856.5,588.2 856.5,576.5 857.5,576.5 857.5,597.0 858.5,597.0 858.5,588.8 859.5,588.8 859.5,580.0 860.5,580.0 860.5,580.1 861.5,580.1 861.5,586.3 862.5,586.3 862.5,585.1 863.5,585.1 863.5,591.2 864.5,591.2 864.5,587.4 865.5,587.4 865.5,591.9 866.5,591.9 866.5,587.4 867.5,587.4 867.5,569.0 868.5,569.0 868.5,568.4 869.5,568.4 869.5,588.3 870.5,588.3 870.5,602.5 871.5,602.5 871.5,582.1 872.5,582.1 872.5,567.4 873.5,567.4 873.5,573.4 874.5,573.4 874.5,571.7 875.5,571.7 875.5,587.3 876.5,587.3 876.5,570.7 877.5,570.7 877.5,564.2 878.5,564.2 878.5,569.8 879.5,569.8 879.5,581.3 880.5,581.3 880.5,594.7 881.5,594.7 881.5,571.5 882.5,571.5 882.5,588.6 883.5,588.6 883.5,571.0 884.5,571.0 884.5,588.2 885.5,588.2 885.5,565.6 886.5,565.6 886.5,583.0 887.5,583.0 887.5,568.6 888.5,568.6 888.5,583.7 889.5,583.7 889.5,568.4 890.5,568.4 890.5,591.3 891.5,591.3 891.5,574.2 892.5,574.2 892.5,571.9 893.5,571.9 893.5,557.9 894.5,557.9 894.5,584.4 895.5,584.4 895.5,573.2 896.5,573.2 896.5,570.2 897.5,570.2 897.5,553.2 898.5,553.2 898.5,563.0 899.5,563.0 899.5,562.2 900.5,562.2 900.5,571.1 901.5,571.1 901.5,558.1 902.5,558.1 902.5,564.8 903.5,564.8 903.5,590.5 904.5,590.5 904.5,563.9 905.5,563.9 905.5,561.7 906.5,561.7 906.5,574.1 907.5,574.1 907.5,553.1 908.5,553.1 908.5,578.5 909.5,578.5 909.5,542.9 910.5,542.9 910.5,549.5 911.5,549.5 911.5,560.1 912.5,560.1 912.5,553.6 913.5,553.6 913.5,568.2 914.5,568.2 914.5,555.0 915.5,555.0 915.5,567.4 916.5,567.4 916.5,538.1 917.5,538.1 917.5,553.7 918.5,553.7 918.5,564.1 919.5,564.1 919.5,562.9 920.5,562.9 920.5,557.6 921.5,557.6 921.5,564.5 922.5,564.5 922.5,564.3 923.5,564.3 923.5,555.3 924.5,555.3 924.5,557.1 925.5,557.1 925.5,564.0 926.5,564.0 926.5,556.1 927.5,556.1 927.5,526.8 928.5,526.8 928.5,538.1 929.5,538.1 929.5,548.6 930.5,548.6 930.5,563.7 931.5,563.7 931.5,557.4 932.5,557.4 932.5,564.3 933.5,564.3 933.5,568.7 934.5,568.7 934.5,564.7 935.5,564.7 935.5,550.1 936.5,550.1 936.5,571.2 937.5,571.2 937.5,548.9 938.5,548.9 938.5,551.2 939.5,551.2 939.5,561.9 940.5,561.9 940.5,543.6 941.5,543.6 941.5,588.1 942.5,588.1 942.5,596.9 943.5,596.9 943.5,570.1 944.5,570.1 944.5,568.7 945.5,568.7 945.5,550.9 946.5,550.9 946.5,580.3 947.5,580.3 947.5,567.8 948.5,567.8 948.5,563.1 949.5,563.1 949.5,562.0 950.5,562.0 950.5,576.7 951.5,576.7 951.5,576.5 952.5,576.5 952.5,560.3 953.5,560.3 953.5,574.0 954.5,574.0 954.5,545.2 955.5,545.2 955.5,598.1 956.5,598.1 956.5,592.3 957.5,592.3 957.5,577.9 958.5,577.9 958.5,570.4 959.5,570.4 959.5,575.1 960.5,575.1 960.5,594.6 961.5,594.6 961.5,593.5 962.5,593.5 962.5,592.0 963.5,592.0 963.5,602.9 964.5,602.9 964.5,584.7 965.5,584.7 965.5,607.3 966.5,607.3 966.5,594.4 967.5,594.4 967.5,584.8 968.5,584.8 968.5,598.6 969.5,598.6 969.5,596.5 970.5,596.5 970.5,585.3 971.5,585.3 971.5,612.5 972.5,612.5 972.5,575.0 973.5,575.0 973.5,595.7 974.5,595.7 974.5,597.3 975.5,597.3 975.5,585.1 976.5,585.1 976.5,616.7 977.5,616.7 977.5,607.2 978.5,607.2 978.5,580.6 979.5,580.6 979.5,581.0 980.5,581.0 980.5,589.1 981.5,589.1 981.5,598.3 982.5,598.3 982.5,605.0 983.5,605.0 983.5,599.1 984.5,599.1 984.5,580.4 985.5,580.4 985.5,604.8 986.5,604.8 986.5,600.4 987.5,600.4 987.5,603.8 988.5,603.8 988.5,574.4 989.5,574.4 989.5,573.9 990.5,573.9 990.5,584.9 991.5,584.9 991.5,587.3 992.5,587.3 992.5,592.0 993.5,592.0 993.5,558.4 994.5,558.4 994.5,580.2 995.5,580.2 995.5,596.5 996.5,596.5 996.5,568.6 997.5,568.6 997.5,578.8 998.5,578.8 998.5,592.0 999.5,592.0 999.5,599.8 1000.5,599.8 1000.5,594.6 1001.5,594.6 1001.5,609.0 1002.5,609.0 1002.5,594.9 1003.5,594.9 1003.5,599.3 1004.5,599.3 1004.5,600.4 1005.5,600.4 1005.5,591.9 1006.5,591.9 1006.5,577.0 1007.5,577.0 1007.5,588.2 1008.5,588.2 1008.5,589.0 1009.5,589.0 1009.5,581.7 1010.5,581.7 1010.5,598.4 1011.5,598.4 1011.5,585.2 1012.5,585.2 1012.5,574.7 1013.5,574.7 1013.5,590.8 1014.5,590.8 1014.5,579.8 1015.5,579.8 1015.5,596.5 1016.5,596.5 1016.5,562.1 1017.5,562.1 1017.5,572.1 1018.5,572.1 1018.5,590.7 1019.5,590.7 1019.5,593.3 1020.5,593.3 1020.5,591.4 1021.5,591.4 1021.5,607.1 1022.5,607.1 1022.5,587.8 1023.5,587.8 1023.5,584.8 1024.5,584.8 1024.5,599.5 1025.5,599.5 1025.5,586.9 1026.5,586.9 1026.5,594.7 1027.5,594.7 1027.5,604.1 1028.5,604.1 1028.5,588.6 1029.5,588.6 1029.5,589.1 1030.5,589.1 1030.5,583.7 1031.5,583.7 1031.5,594.6 1032.5,594.6 1032.5,597.1 1033.5,597.1 1033.5,601.6 1034.5,601.6 1034.5,597.6 1035.5,597.6 1035.5,612.1 1036.5,612.1 1036.5,614.5 1037.5,614.5 1037.5,591.8 1038.5,591.8 1038.5,587.3 1039.5,587.3 1039.5,604.3 1040.5,604.3 1040.5,591.3 1041.5,591.3 1041.5,587.3 1042.5,587.3 1042.5,576.3 1043.5,576.3 1043.5,589.0 1044.5,589.0 1044.5,599.8 1045.5,599.8 1045.5,562.3 1046.5,562.3 1046.5,578.3 1047.5,578.3 1047.5,580.4 1048.5,580.4 1048.5,581.5 1049.5,581.5 1049.5,590.9 1050.5,590.9 1050.5,586.2 1051.5,586.2 1051.5,591.8 1052.5,591.8 1052.5,593.5 1053.5,593.5 1053.5,605.0 1054.5,605.0 1054.5,587.6 1055.5,587.6 1055.5,594.1 1056.5,594.1 1056.5,587.9 1057.5,587.9 1057.5,592.0 1058.5,592.0 1058.5,586.5 1059.5,586.5 1059.5,577.8 1060.5,577.8 1060.5,594.5 1061.5,594.5 1061.5,602.0 1062.5,602.0 1062.5,580.0 1063.5,580.0 1063.5,589.8 1064.5,589.8 1064.5,589.8 1065.5,589.8 1065.5,567.1 1066.5,567.1 1066.5,611.1 1067.5,611.1 1067.5,605.9 1068.5,605.9 1068.5,602.8 1069.5,602.8 1069.5,600.8 1070.5,600.8 1070.5,580.7 1071.5,580.7 1071.5,563.4 1072.5,563.4 1072.5,589.2 1073.5,589.2 1073.5,590.7 1074.5,590.7 1074.5,586.9 1075.5,586.9 1075.5,585.0 1076.5,585.0 1076.5,600.4 1077.5,600.4 1077.5,598.1 1078.5,598.1 1078.5,589.4 1079.5,589.4 1079.5,584.2 1080.5,584.2 1080.5,614.3 1081.5,614.3 1081.5,598.5 1082.5,598.5 1082.5,590.7 1083.5,590.7 1083.5,575.3 1084.5,575.3 1084.5,572.6 1085.5,572.6 1085.5,559.4 1086.5,559.4 1086.5,586.6" fill="none" stroke="#1f77b4" stroke-width="1.5" shape-rendering="crispEdges"/>
<polyline points="49.5,563.1 50.5,563.1 50.5,599.7 51.5,599.7 51.5,574.6 52.5,574.6 52.5,589.0 53.5,589.0 53.5,573.7 54.5,573.7 54.5,592.3 55.5,592.3 55.5,577.6 56.5,577.6 56.5,625.8 57.5,625.8 57.5,607.0 58.5,607.0 58.5,600.2 59.5,600.2 59.5,598.9 60.5,598.9 60.5,602.1 61.5,602.1 61.5,604.1 62.5,604.1 62.5,598.1 63.5,598.1 63.5,583.7 64.5,583.7 64.5,596.9 65.5,596.9 65.5,578.7 66.5,578.7 66.5,591.4 67.5,591.4 67.5,599.4 68.5,599.4 68.5,583.7 69.5,583.7 69.5,599.8 70.5,599.8 70.5,590.1 71.5,590.1 71.5,620.2 72.5,620.2 72.5,591.2 73.5,591.2 73.5,600.4 74.5,600.4 74.5,601.7 75.5,601.7 75.5,596.7 76.5,596.7 76.5,598.6 77.5,598.6 77.5,592.5 78.5,592.5 78.5,596.8 79.5,596.8 79.5,597.2 80.5,597.2 80.5,604.1 81.5,604.1 81.5,608.8 82.5,608.8 82.5,595.4 83.5,595.4 83.5,610.5 84.5,610.5 84.5,595.7 85.5,595.7 85.5,585.8 86.5,585.8 86.5,591.3 87.5,591.3 87.5,588.9 88.5,588.9 88.5,593.6 89.5,593.6 89.5,596.7 90.5,596.7 90.5,598.3 91.5,598.3 91.5,608.4 92.5,608.4 92.5,603.9 93.5,603.9 93.5,591.6 94.5,591.6 94.5,601.9 95.5,601.9 95.5,595.3 96.5,595.3 96.5,604.2 97.5,604.2 97.5,609.1 98.5,609.1 98.5,594.9 99.5,594.9 99.5,604.2 100.5,604.2 100.5,610.6 101.5,610.6 101.5,600.0 102.5,600.0 102.5,584.7 103.5,584.7 103.5,595.0 104.5,595.0 104.5,586.8 105.5,586.8 105.5,606.6 106.5,606.6 106.5,598.3 107.5,598.3 107.5,599.5 108.5,599.5 108.5,614.8 109.5,614.8 109.5,604.0 110.5,604.0 110.5,597.6 111.5,597.6 111.5,577.2 112.5,577.2 112.5,590.6 113.5,590.6 113.5,588.8 114.5,588.8 114.5,594.1 115.5,594.1 115.5,583.0 116.5,583.0 116.5,602.6 117.5,602.6 117.5,609.2 118.5,609.2 118.5,592.3 119.5,592.3 119.5,580.7 120.5,580.7 120.5,597.2 121.5,597.2 121.5,593.6 122.5,593.6 122.5,606.5 123.5,606.5 123.5,595.4 124.5,595.4 124.5,588.2 125.5,588.2 125.5,581.5 126.5,581.5 126.5,596.1 127.5,596.1 127.5,571.5 128.5,571.5 128.5,584.4 129.5,584.4 129.5,603.6 130.5,603.6 130.5,594.4 131.5,594.4 131.5,595.6 132.5,595.6 132.5,605.9 133.5,605.9 133.5,581.5 134.5,581.5 134.5,591.9 135.5,591.9 135.5,600.8 136.5,600.8 136.5,601.5 137.5,601.5 137.5,585.1 138.5,585.1 138.5,596.8 139.5,596.8 139.5,605.7 140.5,605.7 140.5,598.7 141.5,598.7 141.5,611.9 142.5,611.9 142.5,596.2 143.5,596.2 143.5,578.9 144.5,578.9 144.5,595.9 145.5,595.9 145.5,597.7 146.5,597.7 146.5,603.1 147.5,603.1 147.5,601.3 148.5,601.3 148.5,612.0 149.5,612.0 149.5,602.4 150.5,602.4 150.5,598.2 151.5,598.2 151.5,590.7 152.5,590.7 152.5,593.7 153.5,593.7 153.5,609.8 154.5,609.8 154.5,616.1 155.5,616.1 155.5,599.9 156.5,599.9 156.5,598.2 157.5,598.2 157.5,594.1 158.5,594.1 158.5,598.7 159.5,598.7 159.5,596.8 160.5,596.8 160.5,591.0 161.5,591.0 161.5,605.6 162.5,605.6 162.5,584.7 163.5,584.7 163.5,597.8 164.5,597.8 164.5,597.9 165.5,597.9 165.5,603.1 166.5,603.1 166.5,594.6 167.5,594.6 167.5,586.2 168.5,586.2 168.5,595.2 169.5,595.2 169.5,585.4 170.5,585.4 170.5,592.5 171.5,592.5 171.5,588.2 172.5,588.2 172.5,605.7 173.5,605.7 173.5,573.5 174.5,573.5 174.5,583.6 175.5,583.6 175.5,609.0 176.5,609.0 176.5,594.0 177.5,594.0 177.5,581.8 178.5,581.8 178.5,602.7 179.5,602.7 179.5,618.2 180.5,618.2 180.5,596.5 181.5,596.5 181.5,605.3 182.5,605.3 182.5,582.2 183.5,582.2 183.5,590.1 184.5,590.1 184.5,598.3 185.5,598.3 185.5,611.5 186.5,611.5 186.5,589.1 187.5,589.1 187.5,590.1 188.5,590.1 188.5,589.7 189.5,589.7 189.5,588.0 190.5,588.0 190.5,590.4 191.5,590.4 191.5,590.2 192.5,590.2 192.5,600.9 193.5,600.9 193.5,581.3 194.5,581.3 194.5,601.3 195.5,601.3 195.5,614.5 196.5,614.5 196.5,597.9 197.5,597.9 197.5,591.3 198.5,591.3 198.5,586.4 199.5,586.4 199.5,590.8 200.5,590.8 200.5,583.5 201.5,583.5 201.5,598.8 202.5,598.8 202.5,595.1 203.5,595.1 203.5,604.1 204.5,604.1 204.5,599.0 205.5,599.0 205.5,604.6 206.5,604.6 206.5,612.1 207.5,612.1 207.5,606.5 208.5,606.5 208.5,625.3 209.5,625.3 209.5,608.5 210.5,608.5 210.5,591.9 211.5,591.9 211.5,603.2 212.5,603.2 212.5,604.8 213.5,604.8 213.5,598.1 214.5,598.1 214.5,604.7 215.5,604.7 215.5,603.0 216.5,603.0 216.5,611.0 217.5,611.0 217.5,609.0 218.5,609.0 218.5,587.3 219.5,587.3 219.5,592.5 220.5,592.5 220.5,576.8 221.5,576.8 221.5,569.1 222.5,569.1 222.5,585.9 223.5,585.9 223.5,591.2 224.5,591.2 224.5,589.3 225.5,589.3 225.5,609.0 226.5,609.0 226.5,585.1 227.5,585.1 227.5,583.8 228.5,583.8 228.5,617.3 229.5,617.3 229.5,580.4 230.5,580.4 230.5,604.6 231.5,604.6 231.5,595.4 232.5,595.4 232.5,569.7 233.5,569.7 233.5,606.9 234.5,606.9 234.5,593.1 235.5,593.1 235.5,600.5 236.5,600.5 236.5,598.9 237.5,598.9 237.5,600.2 238.5,600.2 238.5,606.1 239.5,606.1 239.5,619.5 240.5,619.5 240.5,599.5 241.5,599.5 241.5,594.7 242.5,594.7 242.5,606.2 243.5,606.2 243.5,601.6 244.5,601.6 244.5,570.1 245.5,570.1 245.5,601.4 246.5,601.4 246.5,592.5 247.5,592.5 247.5,594.1 248.5,594.1 248.5,581.4 249.5,581.4 249.5,616.6 250.5,616.6 250.5,601.8 251.5,601.8 251.5,591.9 252.5,591.9 252.5,592.2 253.5,592.2 253.5,594.6 254.5,594.6 254.5,595.4 255.5,595.4 255.5,604.8 256.5,604.8 256.5,600.6 257.5,600.6 257.5,591.2 258.5,591.2 258.5,594.0 259.5,594.0 259.5,602.9 260.5,602.9 260.5,586.3 261.5,586.3 261.5,592.2 262.5,592.2 262.5,606.6 263.5,606.6 263.5,596.6 264.5,596.6 264.5,611.7 265.5,611.7 265.5,584.7 266.5,584.7 266.5,592.0 267.5,592.0 267.5,588.3 268.5,588.3 268.5,587.7 269.5,587.7 269.5,604.8 270.5,604.8 270.5,608.0 271.5,608.0 271.5,597.9 272.5,597.9 272.5,595.8 273.5,595.8 273.5,615.7 274.5,615.7 274.5,614.0 275.5,614.0 275.5,575.5 276.5,575.5 276.5,596.3 277.5,596.3 277.5,575.9 278.5,575.9 278.5,580.9 279.5,580.9 279.5,590.2 280.5,590.2 280.5,585.0 281.5,585.0 281.5,603.4 282.5,603.4 282.5,592.7 283.5,592.7 283.5,594.7 284.5,594.7 284.5,596.2 285.5,596.2 285.5,603.4 286.5,603.4 286.5,600.3 287.5,600.3 287.5,606.8 288.5,606.8 288.5,602.7 289.5,602.7 289.5,624.2 290.5,624.2 290.5,597.7 291.5,597.7 291.5,596.5 292.5,596.5 292.5,610.6 293.5,610.6 293.5,598.9 294.5,598.9 294.5,580.4 295.5,580.4 295.5,583.9 296.5,583.9 296.5,592.6 297.5,592.6 297.5,602.4 298.5,602.4 298.5,589.1 299.5,589.1 299.5,612.9 300.5,612.9 300.5,601.6 301.5,601.6 301.5,594.4 302.5,594.4 302.5,584.4 303.5,584.4 303.5,604.5 304.5,604.5 304.5,603.6 305.5,603.6 305.5,585.0 306.5,585.0 306.5,611.0 307.5,611.0 307.5,609.9 308.5,609.9 308.5,612.5 309.5,612.5 309.5,596.7 310.5,596.7 310.5,606.8 311.5,606.8 311.5,575.5 312.5,575.5 312.5,601.4 313.5,601.4 313.5,592.6 314.5,592.6 314.5,595.9 315.5,595.9 315.5,614.3 316.5,614.3 316.5,589.5 317.5,589.5 317.5,594.9 318.5,594.9 318.5,586.4 319.5,586.4 319.5,588.5 320.5,588.5 320.5,585.0 321.5,585.0 321.5,600.3 322.5,600.3 322.5,609.9 323.5,609.9 323.5,586.6 324.5,586.6 324.5,579.9 325.5,579.9 325.5,594.4 326.5,594.4 326.5,600.8 327.5,600.8 327.5,599.2 328.5,599.2 328.5,584.3 329.5,584.3 329.5,596.5 330.5,596.5 330.5,587.7 331.5,587.7 331.5,592.1 332.5,592.1 332.5,595.1 333.5,595.1 333.5,591.9 334.5,591.9 334.5,601.2 335.5,601.2 335.5,591.1 336.5,591.1 336.5,612.2 337.5,612.2 337.5,597.6 338.5,597.6 338.5,584.6 339.5,584.6 339.5,606.7 340.5,606.7 340.5,605.4 341.5,605.4 341.5,599.2 342.5,599.2 342.5,596.4 343.5,596.4 343.5,600.0 344.5,600.0 344.5,605.4 345.5,605.4 345.5,595.1 346.5,595.1 346.5,605.1 347.5,605.1 347.5,590.5 348.5,590.5 348.5,601.7 349.5,601.7 349.5,586.1 350.5,586.1 350.5,585.3 351.5,585.3 351.5,602.4 352.5,602.4 352.5,590.9 353.5,590.9 353.5,600.3 354.5,600.3 354.5,577.1 355.5,577.1 355.5,595.5 356.5,595.5 356.5,593.8 357.5,593.8 357.5,603.0 358.5,603.0 358.5,596.1 359.5,596.1 359.5,607.1 360.5,607.1 360.5,616.3 361.5,616.3 361.5,597.6 362.5,597.6 362.5,605.7 363.5,605.7 363.5,613.9 364.5,613.9 364.5,606.5 365.5,606.5 365.5,608.0 366.5,608.0 366.5,594.5 367.5,594.5 367.5,600.8 368.5,600.8 368.5,586.4 369.5,586.4 369.5,605.8 370.5,605.8 370.5,601.3 371.5,601.3 371.5,590.3 372.5,590.3 372.5,577.7 373.5,577.7 373.5,607.6 374.5,607.6 374.5,612.9 375.5,612.9 375.5,611.5 376.5,611.5 376.5,601.9 377.5,601.9 377.5,611.0 378.5,611.0 378.5,597.7 379.5,597.7 379.5,590.6 380.5,590.6 380.5,596.8 381.5,596.8 381.5,589.9 382.5,589.9 382.5,615.4 383.5,615.4 383.5,572.0 384.5,572.0 384.5,599.8 385.5,599.8 385.5,588.5 386.5,588.5 386.5,591.6 387.5,591.6 387.5,604.6 388.5,604.6 388.5,596.5 389.5,596.5 389.5,608.4 390.5,608.4 390.5,595.7 391.5,595.7 391.5,595.8 392.5,595.8 392.5,598.1 393.5,598.1 393.5,609.8 394.5,609.8 394.5,590.0 395.5,590.0 395.5,593.7 396.5,593.7 396.5,591.2 397.5,591.2 397.5,592.1 398.5,592.1 398.5,584.2 399.5,584.2 399.5,593.6 400.5,593.6 400.5,601.3 401.5,601.3 401.5,611.2 402.5,611.2 402.5,601.5 403.5,601.5 403.5,590.7 404.5,590.7 404.5,611.5 405.5,611.5 405.5,579.0 406.5,579.0 406.5,601.7 407.5,601.7 407.5,584.3 408.5,584.3 408.5,595.3 409.5,595.3 409.5,582.9 410.5,582.9 410.5,581.0 411.5,581.0 411.5,591.0 412.5,591.0 412.5,614.8 413.5,614.8 413.5,600.2 414.5,600.2 414.5,605.8 415.5,605.8 415.5,593.2 416.5,593.2 416.5,596.9 417.5,596.9 417.5,588.8 418.5,588.8 418.5,590.7 419.5,590.7 419.5,593.3 420.5,593.3 420.5,606.4 421.5,606.4 421.5,600.0 422.5,600.0 422.5,589.2 423.5,589.2 423.5,594.9 424.5,594.9 424.5,587.8 425.5,587.8 425.5,602.2 426.5,602.2 426.5,599.4 427.5,599.4 427.5,599.3 428.5,599.3 428.5,604.0 429.5,604.0 429.5,602.6 430.5,602.6 430.5,611.8 431.5,611.8 431.5,589.3 432.5,589.3 432.5,604.5 433.5,604.5 433.5,595.2 434.5,595.2 434.5,606.4 435.5,606.4 435.5,591.9 436.5,591.9 436.5,580.2 437.5,580.2 437.5,592.7 438.5,592.7 438.5,590.6 439.5,590.6 439.5,586.0 440.5,586.0 440.5,593.2 441.5,593.2 441.5,608.8 442.5,608.8 442.5,593.6 443.5,593.6 443.5,604.0 444.5,604.0 444.5,611.1 445.5,611.1 445.5,607.5 446.5,607.5 446.5,601.8 447.5,601.8 447.5,606.5 448.5,606.5 448.5,592.7 449.5,592.7 449.5,583.8 450.5,583.8 450.5,581.7 451.5,581.7 451.5,606.6 452.5,606.6 452.5,610.9 453.5,610.9 453.5,594.0 454.5,594.0 454.5,597.3 455.5,597.3 455.5,573.5 456.5,573.5 456.5,604.4 457.5,604.4 457.5,595.9 458.5,595.9 458.5,578.1 459.5,578.1 459.5,602.1 460.5,602.1 460.5,603.2 461.5,603.2 461.5,605.6 462.5,605.6 462.5,595.9 463.5,595.9 463.5,599.7 464.5,599.7 464.5,588.2 465.5,588.2 465.5,611.4 466.5,611.4 466.5,593.7 467.5,593.7 467.5,610.0 468.5,610.0 468.5,602.7 469.5,602.7 469.5,594.9 470.5,594.9 470.5,610.6 471.5,610.6 471.5,590.6 472.5,590.6 472.5,601.1 473.5,601.1 473.5,598.8 474.5,598.8 474.5,596.0 475.5,596.0 475.5,599.3 476.5,599.3 476.5,604.6 477.5,604.6 477.5,593.6 478.5,593.6 478.5,592.3 479.5,592.3 479.5,595.4 480.5,595.4 480.5,591.8 481.5,591.8 481.5,587.3 482.5,587.3 482.5,600.1 483.5,600.1 483.5,579.6 484.5,579.6 484.5,596.2 485.5,596.2 485.5,592.2 486.5,592.2 486.5,598.5 487.5,598.5 487.5,601.5 488.5,601.5 488.5,599.3 489.5,599.3 489.5,596.6 490.5,596.6 490.5,610.2 491.5,610.2 491.5,591.4 492.5,591.4 492.5,598.9 493.5,598.9 493.5,594.3 494.5,594.3 494.5,603.8 495.5,603.8 495.5,615.1 496.5,615.1 496.5,618.1 497.5,618.1 497.5,600.7 498.5,600.7 498.5,608.8 499.5,608.8 499.5,613.6 500.5,613.6 500.5,592.2 501.5,592.2 501.5,612.4 502.5,612.4 502.5,601.7 503.5,601.7 503.5,596.0 504.5,596.0 504.5,602.9 505.5,602.9 505.5,604.0 506.5,604.0 506.5,576.8 507.5,576.8 507.5,598.1 508.5,598.1 508.5,599.4 509.5,599.4 509.5,590.1 510.5,590.1 510.5,599.0 511.5,599.0 511.5,593.1 512.5,593.1 512.5,588.9 513.5,588.9 513.5,595.8 514.5,595.8 514.5,576.7 515.5,576.7 515.5,601.3 516.5,601.3 516.5,602.4 517.5,602.4 517.5,600.1 518.5,600.1 518.5,602.6 519.5,602.6 519.5,592.5 520.5,592.5 520.5,591.1 521.5,591.1 521.5,578.9 522.5,578.9 522.5,579.1 523.5,579.1 523.5,589.1 524.5,589.1 524.5,606.1 525.5,606.1 525.5,596.5 526.5,596.5 526.5,610.4 527.5,610.4 527.5,604.6 528.5,604.6 528.5,586.4 529.5,586.4 529.5,590.7 530.5,590.7 530.5,585.6 531.5,585.6 531.5,581.9 532.5,581.9 532.5,599.3 533.5,599.3 533.5,603.5 534.5,603.5 534.5,587.5 535.5,587.5 535.5,607.5 536.5,607.5 536.5,605.7 537.5,605.7 537.5,591.0 538.5,591.0 538.5,600.3 539.5,600.3 539.5,587.0 540.5,587.0 540.5,597.0 541.5,597.0 541.5,602.2 542.5,602.2 542.5,578.0 543.5,578.0 543.5,611.9 544.5,611.9 544.5,579.5 545.5,579.5 545.5,597.9 546.5,597.9 546.5,592.0 547.5,592.0 547.5,606.0 548.5,606.0 548.5,588.1 549.5,588.1 549.5,592.1 550.5,592.1 550.5,629.1 551.5,629.1 551.5,614.6 552.5,614.6 552.5,606.1 553.5,606.1 553.5,589.9 554.5,589.9 554.5,600.8 555.5,600.8 555.5,580.2 556.5,580.2 556.5,589.0 557.5,589.0 557.5,612.5 558.5,612.5 558.5,605.3 559.5,605.3 559.5,593.6 560.5,593.6 560.5,604.7 561.5,604.7 561.5,605.7 562.5,605.7 562.5,587.0 563.5,587.0 563.5,599.6 564.5,599.6 564.5,611.6 565.5,611.6 565.5,611.8 566.5,611.8 566.5,584.2 567.5,584.2 567.5,601.7 568.5,601.7 568.5,595.4 569.5,595.4 569.5,618.0 570.5,618.0 570.5,573.4 571.5,573.4 571.5,614.6 572.5,614.6 572.5,595.0 573.5,595.0 573.5,602.5 574.5,602.5 574.5,581.5 575.5,581.5 575.5,583.4 576.5,583.4 576.5,594.3 577.5,594.3 577.5,597.7 578.5,597.7 578.5,571.6 579.5,571.6 579.5,590.0 580.5,590.0 580.5,592.1 581.5,592.1 581.5,595.1 582.5,595.1 582.5,603.8 583.5,603.8 583.5,600.0 584.5,600.0 584.5,594.0 585.5,594.0 585.5,584.0 586.5,584.0 586.5,580.0 587.5,580.0 587.5,597.8 588.5,597.8 588.5,611.9 589.5,611.9 589.5,596.9 590.5,596.9 590.5,606.4 591.5,606.4 591.5,585.0 592.5,585.0 592.5,606.4 593.5,606.4 593.5,594.7 594.5,594.7 594.5,598.0 595.5,598.0 595.5,603.7 596.5,603.7 596.5,620.9 597.5,620.9 597.5,599.6 598.5,599.6 598.5,600.9 599.5,600.9 599.5,600.3 600.5,600.3 600.5,602.8 601.5,602.8 601.5,593.7 602.5,593.7 602.5,597.0 603.5,597.0 603.5,613.9 604.5,613.9 604.5,584.6 605.5,584.6 605.5,597.9 606.5,597.9 606.5,607.3 607.5,607.3 607.5,604.0 608.5,604.0 608.5,587.4 609.5,587.4 609.5,583.9 610.5,583.9 610.5,591.3 611.5,591.3 611.5,582.1 612.5,582.1 612.5,605.3 613.5,605.3 613.5,594.7 614.5,594.7 614.5,598.1 615.5,598.1 615.5,592.8 616.5,592.8 616.5,588.3 617.5,588.3 617.5,609.5 618.5,609.5 618.5,615.0 619.5,615.0 619.5,595.4 620.5,595.4 620.5,588.5 621.5,588.5 621.5,603.7 622.5,603.7 622.5,581.7 623.5,581.7 623.5,583.1 624.5,583.1 624.5,598.4 625.5,598.4 625.5,615.7 626.5,615.7 626.5,593.0 627.5,593.0 627.5,597.6 628.5,597.6 628.5,612.9 629.5,612.9 629.5,584.8 630.5,584.8 630.5,580.8 631.5,580.8 631.5,619.3 632.5,619.3 632.5,607.4 633.5,607.4 633.5,592.9 634.5,592.9 634.5,619.1 635.5,619.1 635.5,606.4 636.5,606.4 636.5,594.2 637.5,594.2 637.5,623.1 638.5,623.1 638.5,580.0 639.5,580.0 639.5,613.7 640.5,613.7 640.5,601.1 641.5,601.1 641.5,598.9 642.5,598.9 642.5,599.7 643.5,599.7 643.5,590.4 644.5,590.4 644.5,595.0 645.5,595.0 645.5,591.9 646.5,591.9 646.5,582.1 647.5,582.1 647.5,603.2 648.5,603.2 648.5,583.2 649.5,583.2 649.5,586.9 650.5,586.9 650.5,617.1 651.5,617.1 651.5,608.2 652.5,608.2 652.5,612.9 653.5,612.9 653.5,610.7 654.5,610.7 654.5,599.2 655.5,599.2 655.5,613.1 656.5,613.1 656.5,591.0 657.5,591.0 657.5,587.7 658.5,587.7 658.5,592.0 659.5,592.0 659.5,593.1 660.5,593.1 660.5,602.0 661.5,602.0 661.5,617.2 662.5,617.2 662.5,588.1 663.5,588.1 663.5,593.9 664.5,593.9 664.5,596.5 665.5,596.5 665.5,599.5 666.5,599.5 666.5,593.4 667.5,593.4 667.5,611.0 668.5,611.0 668.5,592.7 669.5,592.7 669.5,587.0 670.5,587.0 670.5,614.3 671.5,614.3 671.5,611.5 672.5,611.5 672.5,596.7 673.5,596.7 673.5,587.6 674.5,587.6 674.5,598.5 675.5,598.5 675.5,604.4 676.5,604.4 676.5,613.2 677.5,613.2 677.5,614.2 678.5,614.2 678.5,594.1 679.5,594.1 679.5,597.9 680.5,597.9 680.5,595.1 681.5,595.1 681.5,597.7 682.5,597.7 682.5,592.4 683.5,592.4 683.5,593.4 684.5,593.4 684.5,595.5 685.5,595.5 685.5,598.3 686.5,598.3 686.5,578.2 687.5,578.2 687.5,593.0 688.5,593.0 688.5,604.9 689.5,604.9 689.5,601.9 690.5,601.9 690.5,604.4 691.5,604.4 691.5,605.0 692.5,605.0 692.5,602.8 693.5,602.8 693.5,608.1 694.5,608.1 694.5,597.5 695.5,597.5 695.5,584.5 696.5,584.5 696.5,610.3 697.5,610.3 697.5,612.4 698.5,612.4 698.5,579.4 699.5,579.4 699.5,606.1 700.5,606.1 700.5,605.4 701.5,605.4 701.5,583.6 702.5,583.6 702.5,601.7 703.5,601.7 703.5,596.7 704.5,596.7 704.5,601.0 705.5,601.0 705.5,591.2 706.5,591.2 706.5,614.7 707.5,614.7 707.5,587.3 708.5,587.3 708.5,586.1 709.5,586.1 709.5,592.5 710.5,592.5 710.5,596.5 711.5,596.5 711.5,591.0 712.5,591.0 712.5,612.4 713.5,612.4 713.5,586.4 714.5,586.4 714.5,621.1 715.5,621.1 715.5,582.1 716.5,582.1 716.5,601.6 717.5,601.6 717.5,615.2 718.5,615.2 718.5,621.2 719.5,621.2 719.5,594.8 720.5,594.8 720.5,581.6 721.5,581.6 721.5,589.7 722.5,589.7 722.5,591.8 723.5,591.8 723.5,604.2 724.5,604.2 724.5,587.2 725.5,587.2 725.5,607.1 726.5,607.1 726.5,587.6 727.5,587.6 727.5,605.7 728.5,605.7 728.5,623.8 729.5,623.8 729.5,605.3 730.5,605.3 730.5,609.8 731.5,609.8 731.5,599.7 732.5,599.7 732.5,594.5 733.5,594.5 733.5,603.2 734.5,603.2 734.5,604.1 735.5,604.1 735.5,568.0 736.5,568.0 736.5,589.5 737.5,589.5 737.5,619.6 738.5,619.6 738.5,604.0 739.5,604.0 739.5,600.0 740.5,600.0 740.5,593.8 741.5,593.8 741.5,593.9 742.5,593.9 742.5,596.3 743.5,596.3 743.5,578.9 744.5,578.9 744.5,615.7 745.5,615.7 745.5,601.8 746.5,601.8 746.5,589.4 747.5,589.4 747.5,611.4 748.5,611.4 748.5,596.3 749.5,596.3 749.5,612.3 750.5,612.3 750.5,591.1 751.5,591.1 751.5,606.2 752.5,606.2 752.5,580.3 753.5,580.3 753.5,606.6 754.5,606.6 754.5,581.9 755.5,581.9 755.5,597.7 756.5,597.7 756.5,601.8 757.5,601.8 757.5,580.6 758.5,580.6 758.5,599.0 759.5,599.0 759.5,592.8 760.5,592.8 760.5,598.8 761.5,598.8 761.5,607.8 762.5,607.8 762.5,597.7 763.5,597.7 763.5,610.8 764.5,610.8 764.5,589.0 765.5,589.0 765.5,587.6 766.5,587.6 766.5,607.5 767.5,607.5 767.5,586.7 768.5,586.7 768.5,601.4 769.5,601.4 769.5,588.6 770.5,588.6 770.5,596.8 771.5,596.8 771.5,601.7 772.5,601.7 772.5,589.7 773.5,589.7 773.5,590.2 774.5,590.2 774.5,593.6 775.5,593.6 775.5,605.9 776.5,605.9 776.5,588.0 777.5,588.0 777.5,587.3 778.5,587.3 778.5,596.4 779.5,596.4 779.5,593.4 780.5,593.4 780.5,588.5 781.5,588.5 781.5,600.4 782.5,600.4 782.5,597.9 783.5,597.9 783.5,589.7 784.5,589.7 784.5,591.7 785.5,591.7 785.5,610.0 786.5,610.0 786.5,597.8 787.5,597.8 787.5,591.2 788.5,591.2 788.5,595.6 789.5,595.6 789.5,602.3 790.5,602.3 790.5,616.5 791.5,616.5 791.5,584.4 792.5,584.4 792.5,601.9 793.5,601.9 793.5,593.0 794.5,593.0 794.5,603.3 795.5,603.3 795.5,595.7 796.5,595.7 796.5,595.3 797.5,595.3 797.5,596.4 798.5,596.4 798.5,600.5 799.5,600.5 799.5,610.0 800.5,610.0 800.5,628.3 801.5,628.3 801.5,599.3 802.5,599.3 802.5,602.7 803.5,602.7 803.5,607.8 804.5,607.8 804.5,629.9 805.5,629.9 805.5,630.8 806.5,630.8 806.5,631.6 807.5,631.6 807.5,623.8 808.5,623.8 808.5,619.6 809.5,619.6 809.5,608.6 810.5,608.6 810.5,623.1 811.5,623.1 811.5,626.6 812.5,626.6 812.5,619.3 813.5,619.3 813.5,617.9 814.5,617.9 814.5,612.9 815.5,612.9 815.5,630.1 816.5,630.1 816.5,625.1 817.5,625.1 817.5,636.5 818.5,636.5 818.5,621.0 819.5,621.0 819.5,622.0 820.5,622.0 820.5,641.1 821.5,641.1 821.5,630.3 822.5,630.3 822.5,613.9 823.5,613.9 823.5,623.0 824.5,623.0 824.5,621.9 825.5,621.9 825.5,633.7 826.5,633.7 826.5,619.2 827.5,619.2 827.5,649.1 828.5,649.1 828.5,652.2 829.5,652.2 829.5,647.5 830.5,647.5 830.5,650.8 831.5,650.8 831.5,654.0 832.5,654.0 832.5,653.0 833.5,653.0 833.5,672.7 834.5,672.7 834.5,654.2 835.5,654.2 835.5,692.6 836.5,692.6 836.5,659.9 837.5,659.9 837.5,677.3 838.5,677.3 838.5,666.4 839.5,666.4 839.5,669.5 840.5,669.5 840.5,676.8 841.5,676.8 841.5,664.0 842.5,664.0 842.5,686.3 843.5,686.3 843.5,683.7 844.5,683.7 844.5,688.6 845.5,688.6 845.5,691.7 846.5,691.7 846.5,676.6 847.5,676.6 847.5,684.1 848.5,684.1 848.5,684.7 849.5,684.7 849.5,699.8 850.5,699.8 850.5,688.0 851.5,688.0 851.5,681.4 852.5,681.4 852.5,695.0 853.5,695.0 853.5,688.1 854.5,688.1 854.5,702.4 855.5,702.4 855.5,708.8 856.5,708.8 856.5,705.9 857.5,705.9 857.5,688.3 858.5,688.3 858.5,706.2 859.5,706.2 859.5,688.3 860.5,688.3 860.5,694.1 861.5,694.1 861.5,708.4 862.5,708.4 862.5,701.3 863.5,701.3 863.5,718.7 864.5,718.7 864.5,720.6 865.5,720.6 865.5,702.5 866.5,702.5 866.5,712.7 867.5,712.7 867.5,702.4 868.5,702.4 868.5,715.5 869.5,715.5 869.5,679.3 870.5,679.3 870.5,701.9 871.5,701.9 871.5,693.7 872.5,693.7 872.5,702.3 873.5,702.3 873.5,698.3 874.5,698.3 874.5,724.9 875.5,724.9 875.5,711.3 876.5,711.3 876.5,704.6 877.5,704.6 877.5,715.4 878.5,715.4 878.5,680.8 879.5,680.8 879.5,721.2 880.5,721.2 880.5,685.6 881.5,685.6 881.5,708.7 882.5,708.7 882.5,727.8 883.5,727.8 883.5,695.6 884.5,695.6 884.5,698.3 885.5,698.3 885.5,684.5 886.5,684.5 886.5,688.6 887.5,688.6 887.5,710.9 888.5,710.9 888.5,710.0 889.5,710.0 889.5,703.6 890.5,703.6 890.5,712.4 891.5,712.4 891.5,704.0 892.5,704.0 892.5,699.6 893.5,699.6 893.5,704.9 894.5,704.9 894.5,696.9 895.5,696.9 895.5,685.2 896.5,685.2 896.5,706.9 897.5,706.9 897.5,714.1 898.5,714.1 898.5,722.4 899.5,722.4 899.5,730.2 900.5,730.2 900.5,707.2 901.5,707.2 901.5,701.7 902.5,701.7 902.5,709.6 903.5,709.6 903.5,714.3 904.5,714.3 904.5,709.8 905.5,709.8 905.5,704.1 906.5,704.1 906.5,712.4 907.5,712.4 907.5,666.7 908.5,666.7 908.5,713.2 909.5,713.2 909.5,723.5 910.5,723.5 910.5,691.4 911.5,691.4 911.5,709.9 912.5,709.9 912.5,698.4 913.5,698.4 913.5,693.6 914.5,693.6 914.5,707.6 915.5,707.6 915.5,706.2 916.5,706.2 916.5,695.5 917.5,695.5 917.5,712.3 918.5,712.3 918.5,696.0 919.5,696.0 919.5,667.9 920.5,667.9 920.5,699.6 921.5,699.6 921.5,681.3 922.5,681.3 922.5,693.3 923.5,693.3 923.5,662.7 924.5,662.7 924.5,659.3 925.5,659.3 925.5,659.0 926.5,659.0 926.5,662.3 927.5,662.3 927.5,661.4 928.5,661.4 928.5,641.0 929.5,641.0 929.5,679.9 930.5,679.9 930.5,628.9 931.5,628.9 931.5,629.4 932.5,629.4 932.5,650.0 933.5,650.0 933.5,643.6 934.5,643.6 934.5,634.7 935.5,634.7 935.5,628.9 936.5,628.9 936.5,611.1 937.5,611.1 937.5,630.4 938.5,630.4 938.5,590.4 939.5,590.4 939.5,594.5 940.5,594.5 940.5,598.1 941.5,598.1 941.5,598.3 942.5,598.3 942.5,607.6 943.5,607.6 943.5,597.8 944.5,597.8 944.5,600.1 945.5,600.1 945.5,602.0 946.5,602.0 946.5,607.3 947.5,607.3 947.5,600.0 948.5,600.0 948.5,585.5 949.5,585.5 949.5,588.2 950.5,588.2 950.5,598.1 951.5,598.1 951.5,594.6 952.5,594.6 952.5,604.9 953.5,604.9 953.5,599.1 954.5,599.1 954.5,601.8 955.5,601.8 955.5,609.1 956.5,609.1 956.5,581.1 957.5,581.1 957.5,587.9 958.5,587.9 958.5,596.4 959.5,596.4 959.5,618.8 960.5,618.8 960.5,595.7 961.5,595.7 961.5,619.2 962.5,619.2 962.5,611.2 963.5,611.2 963.5,602.1 964.5,602.1 964.5,605.3 965.5,605.3 965.5,607.1 966.5,607.1 966.5,596.5 967.5,596.5 967.5,616.3 968.5,616.3 968.5,605.7 969.5,605.7 969.5,618.2 970.5,618.2 970.5,594.6 971.5,594.6 971.5,606.8 972.5,606.8 972.5,606.8 973.5,606.8 973.5,609.7 974.5,609.7 974.5,624.7 975.5,624.7 975.5,607.5 976.5,607.5 976.5,594.4 977.5,594.4 977.5,593.9 978.5,593.9 978.5,587.7 979.5,587.7 979.5,590.6 980.5,590.6 980.5,587.2 981.5,587.2 981.5,610.7 982.5,610.7 982.5,577.6 983.5,577.6 983.5,615.6 984.5,615.6 984.5,594.0 985.5,594.0 985.5,586.3 986.5,586.3 986.5,591.8 987.5,591.8 987.5,599.8 988.5,599.8 988.5,600.9 989.5,600.9 989.5,595.1 990.5,595.1 990.5,611.2 991.5,611.2 991.5,586.7 992.5,586.7 992.5,590.5 993.5,590.5 993.5,607.6 994.5,607.6 994.5,586.5 995.5,586.5 995.5,591.9 996.5,591.9 996.5,605.6 997.5,605.6 997.5,606.4 998.5,606.4 998.5,606.2 999.5,606.2 999.5,606.9 1000.5,606.9 1000.5,599.8 1001.5,599.8 1001.5,602.1 1002.5,602.1 1002.5,601.5 1003.5,601.5 1003.5,599.4 1004.5,599.4 1004.5,595.9 1005.5,595.9 1005.5,600.2 1006.5,600.2 1006.5,608.9 1007.5,608.9 1007.5,600.0 1008.5,600.0 1008.5,609.4 1009.5,609.4 1009.5,575.6 1010.5,575.6 1010.5,620.9 1011.5,620.9 1011.5,590.7 1012.5,590.7 1012.5,596.3 1013.5,596.3 1013.5,594.8 1014.5,594.8 1014.5,619.6 1015.5,619.6 1015.5,584.7 1016.5,584.7 1016.5,596.3 1017.5,596.3 1017.5,596.9 1018.5,596.9 1018.5,624.3 1019.5,624.3 1019.5,614.2 1020.5,614.2 1020.5,590.4 1021.5,590.4 1021.5,596.7 1022.5,596.7 1022.5,600.9 1023.5,600.9 1023.5,591.2 1024.5,591.2 1024.5,614.4 1025.5,614.4 1025.5,602.7 1026.5,602.7 1026.5,581.7 1027.5,581.7 1027.5,600.1 1028.5,600.1 1028.5,598.7 1029.5,598.7 1029.5,594.2 1030.5,594.2 1030.5,617.3 1031.5,617.3 1031.5,606.5 1032.5,606.5 1032.5,596.4 1033.5,596.4 1033.5,592.5 1034.5,592.5 1034.5,602.8 1035.5,602.8 1035.5,580.9 1036.5,580.9 1036.5,609.3 1037.5,609.3 1037.5,585.0 1038.5,585.0 1038.5,600.4 1039.5,600.4 1039.5,596.9 1040.5,596.9 1040.5,604.4 1041.5,604.4 1041.5,592.7 1042.5,592.7 1042.5,602.9 1043.5,602.9 1043.5,581.4 1044.5,581.4 1044.5,613.1 1045.5,613.1 1045.5,604.4 1046.5,604.4 1046.5,608.5 1047.5,608.5 1047.5,593.0 1048.5,593.0 1048.5,601.0 1049.5,601.0 1049.5,594.1 1050.5,594.1 1050.5,610.0 1051.5,610.0 1051.5,587.0 1052.5,587.0 1052.5,597.5 1053.5,597.5 1053.5,570.9 1054.5,570.9 1054.5,609.7 1055.5,609.7 1055.5,585.3 1056.5,585.3 1056.5,607.3 1057.5,607.3 1057.5,612.6 1058.5,612.6 1058.5,605.4 1059.5,605.4 1059.5,586.1 1060.5,586.1 1060.5,601.5 1061.5,601.5 1061.5,605.6 1062.5,605.6 1062.5,606.2 1063.5,606.2 1063.5,602.4 1064.5,602.4 1064.5,598.8 1065.5,598.8 1065.5,594.7 1066.5,594.7 1066.5,595.2 1067.5,595.2 1067.5,599.7 1068.5,599.7 1068.5,597.1 1069.5,597.1 1069.5,594.6 1070.5,594.6 1070.5,594.0 1071.5,594.0 1071.5,598.3 1072.5,598.3 1072.5,591.6 1073.5,591.6 1073.5,607.4 1074.5,607.4 1074.5,598.3 1075.5,598.3 1075.5,610.0 1076.5,610.0 1076.5,590.1 1077.5,590.1 1077.5,588.3 1078.5,588.3 1078.5,591.9 1079.5,591.9 1079.5,596.3 1080.5,596.3 1080.5,597.4 1081.5,597.4 1081.5,607.8 1082.5,607.8 1082.5,575.7 1083.5,575.7 1083.5,600.0 1084.5,600.0 1084.5,580.2 1085.5,580.2 1085.5,587.5 1086.5,587.5 1086.5,595.3" fill="none" stroke="#d62728" stroke-width="1.5" shape-rendering="crispEdges"/>
<polyline points="49.5,579.1 50.5,579.1 50.5,583.7 51.5,583.7 51.5,589.0 52.5,589.0 52.5,581.7 53.5,581.7 53.5,593.0 54.5,593.0 54.5,582.9 55.5,582.9 55.5,584.6 56.5,584.6 56.5,582.4 57.5,582.4 57.5,578.1 58.5,578.1 58.5,579.9 59.5,579.9 59.5,581.0 60.5,581.0 60.5,590.8 61.5,590.8 61.5,582.5 62.5,582.5 62.5,576.1 63.5,576.1 63.5,584.9 64.5,584.9 64.5,585.0 65.5,585.0 65.5,578.0 66.5,578.0 66.5,585.5 67.5,585.5 67.5,584.4 68.5,584.4 68.5,576.9 69.5,576.9 69.5,588.0 70.5,588.0 70.5,576.5 71.5,576.5 71.5,579.2 72.5,579.2 72.5,586.7 73.5,586.7 73.5,575.7 74.5,575.7 74.5,570.6 75.5,570.6 75.5,580.3 76.5,580.3 76.5,584.2 77.5,584.2 77.5,583.5 78.5,583.5 78.5,581.2 79.5,581.2 79.5,576.8 80.5,576.8 80.5,589.0 81.5,589.0 81.5,588.1 82.5,588.1 82.5,584.4 83.5,584.4 83.5,586.0 84.5,586.0 84.5,574.6 85.5,574.6 85.5,587.0 86.5,587.0 86.5,590.4 87.5,590.4 87.5,587.7 88.5,587.7 88.5,588.2 89.5,588.2 89.5,584.9 90.5,584.9 90.5,584.6 91.5,584.6 91.5,572.8 92.5,572.8 92.5,581.1 93.5,581.1 93.5,584.8 94.5,584.8 94.5,579.0 95.5,579.0 95.5,576.3 96.5,576.3 96.5,581.8 97.5,581.8 97.5,579.3 98.5,579.3 98.5,589.8 99.5,589.8 99.5,581.9 100.5,581.9 100.5,583.1 101.5,583.1 101.5,590.5 102.5,590.5 102.5,578.5 103.5,578.5 103.5,585.2 104.5,585.2 104.5,591.7 105.5,591.7 105.5,579.6 106.5,579.6 106.5,581.9 107.5,581.9 107.5,588.8 108.5,588.8 108.5,588.4 109.5,588.4 109.5,581.1 110.5,581.1 110.5,581.3 111.5,581.3 111.5,581.2 112.5,581.2 112.5,580.0 113.5,580.0 113.5,587.5 114.5,587.5 114.5,582.5 115.5,582.5 115.5,580.4 116.5,580.4 116.5,580.3 117.5,580.3 117.5,588.2 118.5,588.2 118.5,570.2 119.5,570.2 119.5,581.9 120.5,581.9 120.5,585.2 121.5,585.2 121.5,580.6 122.5,580.6 122.5,579.2 123.5,579.2 123.5,586.5 124.5,586.5 124.5,585.2 125.5,585.2 125.5,593.6 126.5,593.6 126.5,580.9 127.5,580.9 127.5,586.1 128.5,586.1 128.5,579.0 129.5,579.0 129.5,590.1 130.5,590.1 130.5,589.0 131.5,589.0 131.5,587.2 132.5,587.2 132.5,589.2 133.5,589.2 133.5,587.6 134.5,587.6 134.5,586.4 135.5,586.4 135.5,584.1 136.5,584.1 136.5,588.7 137.5,588.7 137.5,586.9 138.5,586.9 138.5,582.6 139.5,582.6 139.5,583.9 140.5,583.9 140.5,585.1 141.5,585.1 141.5,591.7 142.5,591.7 142.5,584.5 143.5,584.5 143.5,583.6 144.5,583.6 144.5,578.1 145.5,578.1 145.5,588.2 146.5,588.2 146.5,585.5 147.5,585.5 147.5,585.2 148.5,585.2 148.5,585.2 149.5,585.2 149.5,587.0 150.5,587.0 150.5,576.3 151.5,576.3 151.5,579.8 152.5,579.8 152.5,583.0 153.5,583.0 153.5,588.2 154.5,588.2 154.5,586.5 155.5,586.5 155.5,588.7 156.5,588.7 156.5,586.0 157.5,586.0 157.5,587.3 158.5,587.3 158.5,580.9 159.5,580.9 159.5,581.7 160.5,581.7 160.5,583.2 161.5,583.2 161.5,583.0 162.5,583.0 162.5,587.5 163.5,587.5 163.5,584.4 164.5,584.4 164.5,584.4 165.5,584.4 165.5,584.0 166.5,584.0 166.5,591.2 167.5,591.2 167.5,582.0 168.5,582.0 168.5,587.4 169.5,587.4 169.5,581.7 170.5,581.7 170.5,585.9 171.5,585.9 171.5,586.0 172.5,586.0 172.5,583.3 173.5,583.3 173.5,579.3 174.5,579.3 174.5,585.9 175.5,585.9 175.5,585.2 176.5,585.2 176.5,583.1 177.5,583.1 177.5,583.5 178.5,583.5 178.5,582.7 179.5,582.7 179.5,595.6 180.5,595.6 180.5,582.1 181.5,582.1 181.5,576.7 182.5,576.7 182.5,576.3 183.5,576.3 183.5,587.6 184.5,587.6 184.5,575.6 185.5,575.6 185.5,587.0 186.5,587.0 186.5,581.7 187.5,581.7 187.5,585.1 188.5,585.1 188.5,584.1 189.5,584.1 189.5,588.4 190.5,588.4 190.5,581.7 191.5,581.7 191.5,583.6 192.5,583.6 192.5,579.7 193.5,579.7 193.5,573.6 194.5,573.6 194.5,590.1 195.5,590.1 195.5,577.1 196.5,577.1 196.5,586.5 197.5,586.5 197.5,588.6 198.5,588.6 198.5,585.8 199.5,585.8 199.5,579.5 200.5,579.5 200.5,592.0 201.5,592.0 201.5,578.2 202.5,578.2 202.5,588.9 203.5,588.9 203.5,590.1 204.5,590.1 204.5,577.7 205.5,577.7 205.5,587.6 206.5,587.6 206.5,580.0 207.5,580.0 207.5,586.8 208.5,586.8 208.5,574.6 209.5,574.6 209.5,593.3 210.5,593.3 210.5,588.0 211.5,588.0 211.5,584.9 212.5,584.9 212.5,582.9 213.5,582.9 213.5,592.0 214.5,592.0 214.5,587.2 215.5,587.2 215.5,586.8 216.5,586.8 216.5,582.8 217.5,582.8 217.5,583.3 218.5,583.3 218.5,584.3 219.5,584.3 219.5,580.8 220.5,580.8 220.5,586.0 221.5,586.0 221.5,593.8 222.5,593.8 222.5,587.6 223.5,587.6 223.5,589.1 224.5,589.1 224.5,587.5 225.5,587.5 225.5,596.7 226.5,596.7 226.5,582.8 227.5,582.8 227.5,576.1 228.5,576.1 228.5,570.5 229.5,570.5 229.5,582.8 230.5,582.8 230.5,586.7 231.5,586.7 231.5,590.5 232.5,590.5 232.5,578.0 233.5,578.0 233.5,582.5 234.5,582.5 234.5,592.8 235.5,592.8 235.5,577.3 236.5,577.3 236.5,580.6 237.5,580.6 237.5,583.6 238.5,583.6 238.5,580.0 239.5,580.0 239.5,584.9 240.5,584.9 240.5,575.4 241.5,575.4 241.5,581.5 242.5,581.5 242.5,581.8 243.5,581.8 243.5,589.7 244.5,589.7 244.5,587.3 245.5,587.3 245.5,587.6 246.5,587.6 246.5,579.3 247.5,579.3 247.5,590.9 248.5,590.9 248.5,583.7 249.5,583.7 249.5,591.1 250.5,591.1 250.5,576.5 251.5,576.5 251.5,578.7 252.5,578.7 252.5,581.1 253.5,581.1 253.5,591.5 254.5,591.5 254.5,579.0 255.5,579.0 255.5,584.0 256.5,584.0 256.5,581.9 257.5,581.9 257.5,588.8 258.5,588.8 258.5,583.6 259.5,583.6 259.5,592.6 260.5,592.6 260.5,579.6 261.5,579.6 261.5,595.1 262.5,595.1 262.5,584.4 263.5,584.4 263.5,578.2 264.5,578.2 264.5,588.0 265.5,588.0 265.5,583.9 266.5,583.9 266.5,579.9 267.5,579.9 267.5,591.1 268.5,591.1 268.5,581.9 269.5,581.9 269.5,578.4 270.5,578.4 270.5,585.9 271.5,585.9 271.5,588.2 272.5,588.2 272.5,587.9 273.5,587.9 273.5,576.9 274.5,576.9 274.5,592.3 275.5,592.3 275.5,585.5 276.5,585.5 276.5,587.3 277.5,587.3 277.5,578.7 278.5,578.7 278.5,580.1 279.5,580.1 279.5,581.4 280.5,581.4 280.5,584.3 281.5,584.3 281.5,595.3 282.5,595.3 282.5,585.3 283.5,585.3 283.5,585.0 284.5,585.0 284.5,591.2 285.5,591.2 285.5,592.3 286.5,592.3 286.5,588.9 287.5,588.9 287.5,582.2 288.5,582.2 288.5,576.0 289.5,576.0 289.5,572.9 290.5,572.9 290.5,582.4 291.5,582.4 291.5,580.7 292.5,580.7 292.5,588.4 293.5,588.4 293.5,594.2 294.5,594.2 294.5,582.0 295.5,582.0 295.5,583.2 296.5,583.2 296.5,584.5 297.5,584.5 297.5,574.8 298.5,574.8 298.5,584.7 299.5,584.7 299.5,589.3 300.5,589.3 300.5,598.7 301.5,598.7 301.5,577.7 302.5,577.7 302.5,589.3 303.5,589.3 303.5,593.2 304.5,593.2 304.5,579.3 305.5,579.3 305.5,584.0 306.5,584.0 306.5,592.3 307.5,592.3 307.5,582.0 308.5,582.0 308.5,583.6 309.5,583.6 309.5,586.8 310.5,586.8 310.5,591.9 311.5,591.9 311.5,587.6 312.5,587.6 312.5,583.0 313.5,583.0 313.5,588.8 314.5,588.8 314.5,580.5 315.5,580.5 315.5,578.5 316.5,578.5 316.5,583.6 317.5,583.6 317.5,584.2 318.5,584.2 318.5,585.9 319.5,585.9 319.5,586.3 320.5,586.3 320.5,582.5 321.5,582.5 321.5,575.4 322.5,575.4 322.5,575.9 323.5,575.9 323.5,583.2 324.5,583.2 324.5,589.0 325.5,589.0 325.5,580.3 326.5,580.3 326.5,582.1 327.5,582.1 327.5,588.2 328.5,588.2 328.5,578.4 329.5,578.4 329.5,588.6 330.5,588.6 330.5,582.5 331.5,582.5 331.5,582.2 332.5,582.2 332.5,588.1 333.5,588.1 333.5,581.7 334.5,581.7 334.5,589.9 335.5,589.9 335.5,579.4 336.5,579.4 336.5,580.6 337.5,580.6 337.5,582.4 338.5,582.4 338.5,588.6 339.5,588.6 339.5,579.9 340.5,579.9 340.5,586.3 341.5,586.3 341.5,586.9 342.5,586.9 342.5,590.5 343.5,590.5 343.5,581.9 344.5,581.9 344.5,586.8 345.5,586.8 345.5,589.3 346.5,589.3 346.5,594.8 347.5,594.8 347.5,584.8 348.5,584.8 348.5,587.1 349.5,587.1 349.5,585.7 350.5,585.7 350.5,567.8 351.5,567.8 351.5,585.2 352.5,585.2 352.5,583.8 353.5,583.8 353.5,578.5 354.5,578.5 354.5,579.9 355.5,579.9 355.5,583.3 356.5,583.3 356.5,584.8 357.5,584.8 357.5,583.9 358.5,583.9 358.5,581.7 359.5,581.7 359.5,584.5 360.5,584.5 360.5,588.9 361.5,588.9 361.5,583.6 362.5,583.6 362.5,590.8 363.5,590.8 363.5,592.3 364.5,592.3 364.5,589.8 365.5,589.8 365.5,582.1 366.5,582.1 366.5,583.4 367.5,583.4 367.5,570.8 368.5,570.8 368.5,582.9 369.5,582.9 369.5,582.1 370.5,582.1 370.5,579.5 371.5,579.5 371.5,571.9 372.5,571.9 372.5,588.0 373.5,588.0 373.5,589.2 374.5,589.2 374.5,582.6 375.5,582.6 375.5,588.1 376.5,588.1 376.5,581.9 377.5,581.9 377.5,573.4 378.5,573.4 378.5,583.3 379.5,583.3 379.5,581.3 380.5,581.3 380.5,582.2 381.5,582.2 381.5,583.0 382.5,583.0 382.5,577.9 383.5,577.9 383.5,575.3 384.5,575.3 384.5,588.9 385.5,588.9 385.5,584.2 386.5,584.2 386.5,585.8 387.5,585.8 387.5,577.8 388.5,577.8 388.5,570.1 389.5,570.1 389.5,575.6 390.5,575.6 390.5,589.1 391.5,589.1 391.5,584.8 392.5,584.8 392.5,571.0 393.5,571.0 393.5,577.1 394.5,577.1 394.5,574.0 395.5,574.0 395.5,580.0 396.5,580.0 396.5,588.5 397.5,588.5 397.5,575.6 398.5,575.6 398.5,580.3 399.5,580.3 399.5,576.0 400.5,576.0 400.5,572.3 401.5,572.3 401.5,567.4 402.5,567.4 402.5,567.1 403.5,567.1 403.5,571.4 404.5,571.4 404.5,568.7 405.5,568.7 405.5,568.0 406.5,568.0 406.5,558.2 407.5,558.2 407.5,556.4 408.5,556.4 408.5,558.2 409.5,558.2 409.5,554.2 410.5,554.2 410.5,548.0 411.5,548.0 411.5,547.5 412.5,547.5 412.5,556.0 413.5,556.0 413.5,544.5 414.5,544.5 414.5,545.7 415.5,545.7 415.5,545.3 416.5,545.3 416.5,537.4 417.5,537.4 417.5,544.8 418.5,544.8 418.5,534.8 419.5,534.8 419.5,535.0 420.5,535.0 420.5,526.4 421.5,526.4 421.5,529.8 422.5,529.8 422.5,523.5 423.5,523.5 423.5,524.2 424.5,524.2 424.5,515.1 425.5,515.1 425.5,512.3 426.5,512.3 426.5,511.9 427.5,511.9 427.5,513.3 428.5,513.3 428.5,499.9 429.5,499.9 429.5,504.2 430.5,504.2 430.5,500.5 431.5,500.5 431.5,503.6 432.5,503.6 432.5,483.6 433.5,483.6 433.5,484.7 434.5,484.7 434.5,493.4 435.5,493.4 435.5,488.4 436.5,488.4 436.5,486.4 437.5,486.4 437.5,481.0 438.5,481.0 438.5,479.7 439.5,479.7 439.5,477.0 440.5,477.0 440.5,475.6 441.5,475.6 441.5,460.8 442.5,460.8 442.5,459.5 443.5,459.5 443.5,465.6 444.5,465.6 444.5,461.8 445.5,461.8 445.5,447.7 446.5,447.7 446.5,457.6 447.5,457.6 447.5,448.0 448.5,448.0 448.5,446.1 449.5,446.1 449.5,436.6 450.5,436.6 450.5,429.7 451.5,429.7 451.5,430.5 452.5,430.5 452.5,427.4 453.5,427.4 453.5,420.4 454.5,420.4 454.5,425.0 455.5,425.0 455.5,423.1 456.5,423.1 456.5,412.9 457.5,412.9 457.5,415.6 458.5,415.6 458.5,417.5 459.5,417.5 459.5,414.0 460.5,414.0 460.5,422.8 461.5,422.8 461.5,426.8 462.5,426.8 462.5,416.9 463.5,416.9 463.5,424.7 464.5,424.7 464.5,427.0 465.5,427.0 465.5,430.8 466.5,430.8 466.5,420.0 467.5,420.0 467.5,424.1 468.5,424.1 468.5,432.4 469.5,432.4 469.5,438.8 470.5,438.8 470.5,438.2 471.5,438.2 471.5,435.9 472.5,435.9 472.5,446.2 473.5,446.2 473.5,443.7 474.5,443.7 474.5,443.6 475.5,443.6 475.5,455.3 476.5,455.3 476.5,462.8 477.5,462.8 477.5,466.9 478.5,466.9 478.5,466.5 479.5,466.5 479.5,465.3 480.5,465.3 480.5,466.6 481.5,466.6 481.5,479.5 482.5,479.5 482.5,477.2 483.5,477.2 483.5,489.5 484.5,489.5 484.5,496.0 485.5,496.0 485.5,496.7 486.5,496.7 486.5,505.2 487.5,505.2 487.5,511.8 488.5,511.8 488.5,521.5 489.5,521.5 489.5,520.2 490.5,520.2 490.5,528.4 491.5,528.4 491.5,535.6 492.5,535.6 492.5,534.0 493.5,534.0 493.5,543.2 494.5,543.2 494.5,548.6 495.5,548.6 495.5,554.0 496.5,554.0 496.5,549.5 497.5,549.5 497.5,556.9 498.5,556.9 498.5,560.7 499.5,560.7 499.5,568.2 500.5,568.2 500.5,563.4 501.5,563.4 501.5,572.9 502.5,572.9 502.5,569.4 503.5,569.4 503.5,571.3 504.5,571.3 504.5,563.5 505.5,563.5 505.5,563.3 506.5,563.3 506.5,567.7 507.5,567.7 507.5,561.5 508.5,561.5 508.5,571.8 509.5,571.8 509.5,563.8 510.5,563.8 510.5,575.4 511.5,575.4 511.5,558.5 512.5,558.5 512.5,563.7 513.5,563.7 513.5,562.3 514.5,562.3 514.5,559.8 515.5,559.8 515.5,560.1 516.5,560.1 516.5,546.8 517.5,546.8 517.5,556.9 518.5,556.9 518.5,561.0 519.5,561.0 519.5,554.5 520.5,554.5 520.5,547.5 521.5,547.5 521.5,551.3 522.5,551.3 522.5,552.6 523.5,552.6 523.5,556.0 524.5,556.0 524.5,547.3 525.5,547.3 525.5,555.1 526.5,555.1 526.5,544.7 527.5,544.7 527.5,552.0 528.5,552.0 528.5,547.4 529.5,547.4 529.5,556.5 530.5,556.5 530.5,547.2 531.5,547.2 531.5,548.9 532.5,548.9 532.5,540.0 533.5,540.0 533.5,530.8 534.5,530.8 534.5,539.5 535.5,539.5 535.5,538.6 536.5,538.6 536.5,533.6 537.5,533.6 537.5,535.8 538.5,535.8 538.5,525.5 539.5,525.5 539.5,532.3 540.5,532.3 540.5,529.4 541.5,529.4 541.5,538.4 542.5,538.4 542.5,530.5 543.5,530.5 543.5,529.4 544.5,529.4 544.5,528.0 545.5,528.0 545.5,517.2 546.5,517.2 546.5,520.7 547.5,520.7 547.5,530.7 548.5,530.7 548.5,526.3 549.5,526.3 549.5,515.4 550.5,515.4 550.5,521.7 551.5,521.7 551.5,516.2 552.5,516.2 552.5,518.2 553.5,518.2 553.5,514.3 554.5,514.3 554.5,511.3 555.5,511.3 555.5,502.6 556.5,502.6 556.5,505.4 557.5,505.4 557.5,500.5 558.5,500.5 558.5,501.1 559.5,501.1 559.5,504.7 560.5,504.7 560.5,499.9 561.5,499.9 561.5,498.5 562.5,498.5 562.5,497.4 563.5,497.4 563.5,484.6 564.5,484.6 564.5,484.7 565.5,484.7 565.5,486.7 566.5,486.7 566.5,483.5 567.5,483.5 567.5,462.2 568.5,462.2 568.5,463.6 569.5,463.6 569.5,466.4 570.5,466.4 570.5,475.4 571.5,475.4 571.5,452.4 572.5,452.4 572.5,450.8 573.5,450.8 573.5,448.6 574.5,448.6 574.5,448.2 575.5,448.2 575.5,433.2 576.5,433.2 576.5,433.3 577.5,433.3 577.5,430.4 578.5,430.4 578.5,425.7 579.5,425.7 579.5,422.6 580.5,422.6 580.5,424.2 581.5,424.2 581.5,424.3 582.5,424.3 582.5,417.4 583.5,417.4 583.5,413.1 584.5,413.1 584.5,409.1 585.5,409.1 585.5,403.4 586.5,403.4 586.5,398.1 587.5,398.1 587.5,395.8 588.5,395.8 588.5,404.9 589.5,404.9 589.5,402.8 590.5,402.8 590.5,397.0 591.5,397.0 591.5,393.3 592.5,393.3 592.5,389.5 593.5,389.5 593.5,389.1 594.5,389.1 594.5,382.1 595.5,382.1 595.5,376.8 596.5,376.8 596.5,371.8 597.5,371.8 597.5,376.6 598.5,376.6 598.5,368.4 599.5,368.4 599.5,361.1 600.5,361.1 600.5,365.7 601.5,365.7 601.5,360.9 602.5,360.9 602.5,366.3 603.5,366.3 603.5,367.0 604.5,367.0 604.5,360.0 605.5,360.0 605.5,359.1 606.5,359.1 606.5,362.6 607.5,362.6 607.5,344.5 608.5,344.5 608.5,342.7 609.5,342.7 609.5,347.1 610.5,347.1 610.5,343.1 611.5,343.1 611.5,344.2 612.5,344.2 612.5,346.8 613.5,346.8 613.5,338.9 614.5,338.9 614.5,328.3 615.5,328.3 615.5,349.2 616.5,349.2 616.5,327.8 617.5,327.8 617.5,324.7 618.5,324.7 618.5,334.7 619.5,334.7 619.5,318.7 620.5,318.7 620.5,319.2 621.5,319.2 621.5,323.3 622.5,323.3 622.5,317.4 623.5,317.4 623.5,320.5 624.5,320.5 624.5,323.7 625.5,323.7 625.5,316.9 626.5,316.9 626.5,312.7 627.5,312.7 627.5,315.8 628.5,315.8 628.5,312.9 629.5,312.9 629.5,324.2 630.5,324.2 630.5,303.1 631.5,303.1 631.5,312.8 632.5,312.8 632.5,303.2 633.5,303.2 633.5,305.0 634.5,305.0 634.5,291.0 635.5,291.0 635.5,292.6 636.5,292.6 636.5,288.7 637.5,288.7 637.5,283.2 638.5,283.2 638.5,285.5 639.5,285.5 639.5,293.2 640.5,293.2 640.5,274.0 641.5,274.0 641.5,286.4 642.5,286.4 642.5,275.8 643.5,275.8 643.5,273.8 644.5,273.8 644.5,263.9 645.5,263.9 645.5,269.2 646.5,269.2 646.5,272.8 647.5,272.8 647.5,259.7 648.5,259.7 648.5,260.4 649.5,260.4 649.5,260.0 650.5,260.0 650.5,261.0 651.5,261.0 651.5,261.0 652.5,261.0 652.5,275.0 653.5,275.0 653.5,276.1 654.5,276.1 654.5,271.6 655.5,271.6 655.5,284.1 656.5,284.1 656.5,275.5 657.5,275.5 657.5,280.9 658.5,280.9 658.5,273.0 659.5,273.0 659.5,272.0 660.5,272.0 660.5,279.7 661.5,279.7 661.5,291.8 662.5,291.8 662.5,284.3 663.5,284.3 663.5,289.9 664.5,289.9 664.5,293.8 665.5,293.8 665.5,287.4 666.5,287.4 666.5,282.1 667.5,282.1 667.5,287.4 668.5,287.4 668.5,284.9 669.5,284.9 669.5,290.2 670.5,290.2 670.5,284.0 671.5,284.0 671.5,293.2 672.5,293.2 672.5,291.2 673.5,291.2 673.5,286.1 674.5,286.1 674.5,284.8 675.5,284.8 675.5,286.1 676.5,286.1 676.5,282.7 677.5,282.7 677.5,283.3 678.5,283.3 678.5,286.5 679.5,286.5 679.5,277.6 680.5,277.6 680.5,278.3 681.5,278.3 681.5,278.6 682.5,278.6 682.5,267.7 683.5,267.7 683.5,285.1 684.5,285.1 684.5,273.9 685.5,273.9 685.5,278.1 686.5,278.1 686.5,255.3 687.5,255.3 687.5,249.9 688.5,249.9 688.5,253.7 689.5,253.7 689.5,251.1 690.5,251.1 690.5,251.4 691.5,251.4 691.5,246.1 692.5,246.1 692.5,244.5 693.5,244.5 693.5,233.6 694.5,233.6 694.5,241.6 695.5,241.6 695.5,228.5 696.5,228.5 696.5,210.7 697.5,210.7 697.5,210.9 698.5,210.9 698.5,206.3 699.5,206.3 699.5,205.3 700.5,205.3 700.5,197.8 701.5,197.8 701.5,202.1 702.5,202.1 702.5,210.8 703.5,210.8 703.5,200.2 704.5,200.2 704.5,208.4 705.5,208.4 705.5,224.3 706.5,224.3 706.5,232.2 707.5,232.2 707.5,245.3 708.5,245.3 708.5,249.7 709.5,249.7 709.5,267.3 710.5,267.3 710.5,278.1 711.5,278.1 711.5,285.1 712.5,285.1 712.5,307.8 713.5,307.8 713.5,332.5 714.5,332.5 714.5,347.0 715.5,347.0 715.5,359.5 716.5,359.5 716.5,379.8 717.5,379.8 717.5,411.1 718.5,411.1 718.5,443.2 719.5,443.2 719.5,464.0 720.5,464.0 720.5,482.4 721.5,482.4 721.5,479.8 722.5,479.8 722.5,487.6 723.5,487.6 723.5,497.8 724.5,497.8 724.5,505.0 725.5,505.0 725.5,512.4 726.5,512.4 726.5,510.7 727.5,510.7 727.5,541.3 728.5,541.3 728.5,540.1 729.5,540.1 729.5,546.9 730.5,546.9 730.5,549.9 731.5,549.9 731.5,560.3 732.5,560.3 732.5,567.7 733.5,567.7 733.5,562.8 734.5,562.8 734.5,571.0 735.5,571.0 735.5,571.0 736.5,571.0 736.5,566.8 737.5,566.8 737.5,565.4 738.5,565.4 738.5,573.7 739.5,573.7 739.5,582.5 740.5,582.5 740.5,572.7 741.5,572.7 741.5,577.2 742.5,577.2 742.5,572.3 743.5,572.3 743.5,569.5 744.5,569.5 744.5,579.3 745.5,579.3 745.5,570.4 746.5,570.4 746.5,581.6 747.5,581.6 747.5,565.7 748.5,565.7 748.5,559.8 749.5,559.8 749.5,567.7 750.5,567.7 750.5,568.9 751.5,568.9 751.5,567.5 752.5,567.5 752.5,562.3 753.5,562.3 753.5,554.1 754.5,554.1 754.5,564.6 755.5,564.6 755.5,552.3 756.5,552.3 756.5,567.5 757.5,567.5 757.5,551.7 758.5,551.7 758.5,552.1 759.5,552.1 759.5,550.3 760.5,550.3 760.5,557.4 761.5,557.4 761.5,558.7 762.5,558.7 762.5,549.5 763.5,549.5 763.5,547.6 764.5,547.6 764.5,538.2 765.5,538.2 765.5,546.1 766.5,546.1 766.5,527.2 767.5,527.2 767.5,542.8 768.5,542.8 768.5,537.3 769.5,537.3 769.5,528.7 770.5,528.7 770.5,535.2 771.5,535.2 771.5,533.0 772.5,533.0 772.5,536.7 773.5,536.7 773.5,533.6 774.5,533.6 774.5,524.0 775.5,524.0 775.5,523.4 776.5,523.4 776.5,512.7 777.5,512.7 777.5,521.2 778.5,521.2 778.5,508.9 779.5,508.9 779.5,508.8 780.5,508.8 780.5,499.7 781.5,499.7 781.5,499.4 782.5,499.4 782.5,500.0 783.5,500.0 783.5,488.4 784.5,488.4 784.5,488.2 785.5,488.2 785.5,476.9 786.5,476.9 786.5,480.8 787.5,480.8 787.5,478.3 788.5,478.3 788.5,469.3 789.5,469.3 789.5,463.9 790.5,463.9 790.5,454.7 791.5,454.7 791.5,457.1 792.5,457.1 792.5,453.0 793.5,453.0 793.5,439.1 794.5,439.1 794.5,433.3 795.5,433.3 795.5,424.3 796.5,424.3 796.5,413.5 797.5,413.5 797.5,412.7 798.5,412.7 798.5,398.5 799.5,398.5 799.5,405.7 800.5,405.7 800.5,402.1 801.5,402.1 801.5,391.0 802.5,391.0 802.5,381.2 803.5,381.2 803.5,371.9 804.5,371.9 804.5,366.0 805.5,366.0 805.5,352.3 806.5,352.3 806.5,352.8 807.5,352.8 807.5,345.0 808.5,345.0 808.5,340.9 809.5,340.9 809.5,339.6 810.5,339.6 810.5,325.2 811.5,325.2 811.5,327.1 812.5,327.1 812.5,320.4 813.5,320.4 813.5,309.8 814.5,309.8 814.5,314.0 815.5,314.0 815.5,308.1 816.5,308.1 816.5,307.8 817.5,307.8 817.5,305.0 818.5,305.0 818.5,300.6 819.5,300.6 819.5,293.7 820.5,293.7 820.5,293.4 821.5,293.4 821.5,284.8 822.5,284.8 822.5,278.4 823.5,278.4 823.5,277.7 824.5,277.7 824.5,265.8 825.5,265.8 825.5,272.2 826.5,272.2 826.5,268.8 827.5,268.8 827.5,258.8 828.5,258.8 828.5,261.5 829.5,261.5 829.5,254.0 830.5,254.0 830.5,245.7 831.5,245.7 831.5,242.6 832.5,242.6 832.5,239.1 833.5,239.1 833.5,227.3 834.5,227.3 834.5,227.6 835.5,227.6 835.5,224.5 836.5,224.5 836.5,219.7 837.5,219.7 837.5,211.0 838.5,211.0 838.5,215.4 839.5,215.4 839.5,194.3 840.5,194.3 840.5,199.0 841.5,199.0 841.5,196.9 842.5,196.9 842.5,202.2 843.5,202.2 843.5,185.7 844.5,185.7 844.5,186.5 845.5,186.5 845.5,185.4 846.5,185.4 846.5,188.7 847.5,188.7 847.5,185.0 848.5,185.0 848.5,182.4 849.5,182.4 849.5,191.3 850.5,191.3 850.5,188.4 851.5,188.4 851.5,184.4 852.5,184.4 852.5,180.1 853.5,180.1 853.5,180.9 854.5,180.9 854.5,180.5 855.5,180.5 855.5,190.7 856.5,190.7 856.5,173.4 857.5,173.4 857.5,175.1 858.5,175.1 858.5,173.9 859.5,173.9 859.5,174.4 860.5,174.4 860.5,177.8 861.5,177.8 861.5,166.0 862.5,166.0 862.5,166.5 863.5,166.5 863.5,177.1 864.5,177.1 864.5,173.0 865.5,173.0 865.5,179.6 866.5,179.6 866.5,168.8 867.5,168.8 867.5,165.0 868.5,165.0 868.5,170.0 869.5,170.0 869.5,168.1 870.5,168.1 870.5,172.0 871.5,172.0 871.5,161.5 872.5,161.5 872.5,163.1 873.5,163.1 873.5,163.5 874.5,163.5 874.5,157.4 875.5,157.4 875.5,152.1 876.5,152.1 876.5,149.2 877.5,149.2 877.5,148.9 878.5,148.9 878.5,148.1 879.5,148.1 879.5,137.1 880.5,137.1 880.5,133.3 881.5,133.3 881.5,146.0 882.5,146.0 882.5,128.6 883.5,128.6 883.5,132.6 884.5,132.6 884.5,127.7 885.5,127.7 885.5,136.6 886.5,136.6 886.5,129.4 887.5,129.4 887.5,132.5 888.5,132.5 888.5,129.4 889.5,129.4 889.5,116.6 890.5,116.6 890.5,118.2 891.5,118.2 891.5,106.2 892.5,106.2 892.5,108.8 893.5,108.8 893.5,112.4 894.5,112.4 894.5,108.0 895.5,108.0 895.5,105.3 896.5,105.3 896.5,101.7 897.5,101.7 897.5,97.3 898.5,97.3 898.5,101.0 899.5,101.0 899.5,96.7 900.5,96.7 900.5,93.8 901.5,93.8 901.5,97.2 902.5,97.2 902.5,88.0 903.5,88.0 903.5,97.6 904.5,97.6 904.5,85.3 905.5,85.3 905.5,92.9 906.5,92.9 906.5,83.5 907.5,83.5 907.5,78.2 908.5,78.2 908.5,77.7 909.5,77.7 909.5,80.4 910.5,80.4 910.5,77.5 911.5,77.5 911.5,76.2 912.5,76.2 912.5,72.3 913.5,72.3 913.5,68.0 914.5,68.0 914.5,64.2 915.5,64.2 915.5,61.7 916.5,61.7 916.5,62.0 917.5,62.0 917.5,54.3 918.5,54.3 918.5,68.3 919.5,68.3 919.5,70.6 920.5,70.6 920.5,72.9 921.5,72.9 921.5,72.3 922.5,72.3 922.5,79.6 923.5,79.6 923.5,86.1 924.5,86.1 924.5,80.4 925.5,80.4 925.5,83.6 926.5,83.6 926.5,90.1 927.5,90.1 927.5,95.8 928.5,95.8 928.5,96.7 929.5,96.7 929.5,118.8 930.5,118.8 930.5,118.1 931.5,118.1 931.5,149.1 932.5,149.1 932.5,146.7 933.5,146.7 933.5,161.5 934.5,161.5 934.5,177.2 935.5,177.2 935.5,186.5 936.5,186.5 936.5,210.0 937.5,210.0 937.5,229.5 938.5,229.5 938.5,263.5 939.5,263.5 939.5,285.5 940.5,285.5 940.5,319.6 941.5,319.6 941.5,345.6 942.5,345.6 942.5,372.6 943.5,372.6 943.5,382.3 944.5,382.3 944.5,386.5 945.5,386.5 945.5,404.9 946.5,404.9 946.5,422.1 947.5,422.1 947.5,435.7 948.5,435.7 948.5,435.5 949.5,435.5 949.5,452.4 950.5,452.4 950.5,460.3 951.5,460.3 951.5,471.9 952.5,471.9 952.5,491.5 953.5,491.5 953.5,502.8 954.5,502.8 954.5,499.3 955.5,499.3 955.5,510.2 956.5,510.2 956.5,527.4 957.5,527.4 957.5,534.0 958.5,534.0 958.5,538.0 959.5,538.0 959.5,533.8 960.5,533.8 960.5,546.1 961.5,546.1 961.5,556.5 962.5,556.5 962.5,554.6 963.5,554.6 963.5,555.0 964.5,555.0 964.5,555.8 965.5,555.8 965.5,562.8 966.5,562.8 966.5,567.9 967.5,567.9 967.5,574.3 968.5,574.3 968.5,567.0 969.5,567.0 969.5,570.0 970.5,570.0 970.5,564.0 971.5,564.0 971.5,579.4 972.5,579.4 972.5,572.5 973.5,572.5 973.5,585.0 974.5,585.0 974.5,575.2 975.5,575.2 975.5,578.6 976.5,578.6 976.5,582.3 977.5,582.3 977.5,580.3 978.5,580.3 978.5,567.3 979.5,567.3 979.5,578.0 980.5,578.0 980.5,580.0 981.5,580.0 981.5,591.7 982.5,591.7 982.5,586.3 983.5,586.3 983.5,587.5 984.5,587.5 984.5,583.1 985.5,583.1 985.5,587.4 986.5,587.4 986.5,580.3 987.5,580.3 987.5,573.2 988.5,573.2 988.5,576.3 989.5,576.3 989.5,582.1 990.5,582.1 990.5,577.0 991.5,577.0 991.5,579.6 992.5,579.6 992.5,579.1 993.5,579.1 993.5,587.3 994.5,587.3 994.5,566.6 995.5,566.6 995.5,573.5 996.5,573.5 996.5,580.8 997.5,580.8 997.5,578.8 998.5,578.8 998.5,590.5 999.5,590.5 999.5,585.0 1000.5,585.0 1000.5,581.4 1001.5,581.4 1001.5,577.4 1002.5,577.4 1002.5,581.1 1003.5,581.1 1003.5,579.7 1004.5,579.7 1004.5,572.8 1005.5,572.8 1005.5,576.0 1006.5,576.0 1006.5,583.4 1007.5,583.4 1007.5,582.4 1008.5,582.4 1008.5,581.0 1009.5,581.0 1009.5,589.3 1010.5,589.3 1010.5,576.1 1011.5,576.1 1011.5,579.1 1012.5,579.1 1012.5,584.9 1013.5,584.9 1013.5,586.9 1014.5,586.9 1014.5,577.3 1015.5,577.3 1015.5,582.7 1016.5,582.7 1016.5,579.5 1017.5,579.5 1017.5,576.2 1018.5,576.2 1018.5,581.5 1019.5,581.5 1019.5,577.6 1020.5,577.6 1020.5,586.0 1021.5,586.0 1021.5,583.3 1022.5,583.3 1022.5,580.2 1023.5,580.2 1023.5,587.4 1024.5,587.4 1024.5,588.7 1025.5,588.7 1025.5,578.2 1026.5,578.2 1026.5,573.4 1027.5,573.4 1027.5,578.0 1028.5,578.0 1028.5,582.1 1029.5,582.1 1029.5,569.7 1030.5,569.7 1030.5,571.0 1031.5,571.0 1031.5,587.5 1032.5,587.5 1032.5,581.6 1033.5,581.6 1033.5,584.3 1034.5,584.3 1034.5,582.0 1035.5,582.0 1035.5,579.1 1036.5,579.1 1036.5,583.4 1037.5,583.4 1037.5,580.7 1038.5,580.7 1038.5,587.2 1039.5,587.2 1039.5,581.8 1040.5,581.8 1040.5,583.3 1041.5,583.3 1041.5,580.9 1042.5,580.9 1042.5,576.2 1043.5,576.2 1043.5,578.6 1044.5,578.6 1044.5,585.4 1045.5,585.4 1045.5,577.5 1046.5,577.5 1046.5,582.3 1047.5,582.3 1047.5,579.5 1048.5,579.5 1048.5,580.5 1049.5,580.5 1049.5,589.2 1050.5,589.2 1050.5,576.0 1051.5,576.0 1051.5,577.4 1052.5,577.4 1052.5,577.7 1053.5,577.7 1053.5,588.6 1054.5,588.6 1054.5,585.1 1055.5,585.1 1055.5,574.7 1056.5,574.7 1056.5,578.0 1057.5,578.0 1057.5,581.1 1058.5,581.1 1058.5,580.6 1059.5,580.6 1059.5,579.3 1060.5,579.3 1060.5,587.1 1061.5,587.1 1061.5,578.0 1062.5,578.0 1062.5,584.6 1063.5,584.6 1063.5,582.6 1064.5,582.6 1064.5,582.0 1065.5,582.0 1065.5,573.7 1066.5,573.7 1066.5,578.1 1067.5,578.1 1067.5,589.4 1068.5,589.4 1068.5,585.3 1069.5,585.3 1069.5,575.6 1070.5,575.6 1070.5,584.3 1071.5,584.3 1071.5,574.6 1072.5,574.6 1072.5,587.2 1073.5,587.2 1073.5,579.7 1074.5,579.7 1074.5,591.6 1075.5,591.6 1075.5,589.7 1076.5,589.7 1076.5,587.3 1077.5,587.3 1077.5,577.8 1078.5,577.8 1078.5,583.8 1079.5,583.8 1079.5,578.6 1080.5,578.6 1080.5,581.0 1081.5,581.0 1081.5,579.5 1082.5,579.5 1082.5,582.8 1083.5,582.8 1083.5,586.7 1084.5,586.7 1084.5,587.5 1085.5,587.5 1085.5,573.1 1086.5,573.1 1086.5,578.7" fill="none" stroke="#1ac938" stroke-width="1.5" shape-rendering="crispEdges"/>
<g font-family="Liberation Sans" font-size="12" fill="#333"><text x="31" y="711.3" text-anchor="end">-20</text><text x="31" y="605.3" text-anchor="end">0</text><text x="31" y="498.3" text-anchor="end">20</text><text x="31" y="391.3" text-anchor="end">40</text><text x="31" y="285.3" text-anchor="end">60</text><text x="31" y="178.3" text-anchor="end">80</text><text x="31" y="72.3" text-anchor="end">100</text><text x="49.5" y="774.5" text-anchor="middle">0</text><text x="216.5" y="774.5" text-anchor="middle">2</text><text x="383.5" y="774.5" text-anchor="middle">4</text><text x="550.5" y="774.5" text-anchor="middle">6</text><text x="717.5" y="774.5" text-anchor="middle">8</text><text x="884.5" y="774.5" text-anchor="middle">10</text><text x="1051.5" y="774.5" text-anchor="middle">12</text></g>
<rect x="49.5" y="580.5" width="3" height="4" fill="#1ac938" stroke="#000" stroke-width="1"/>
<rect x="49.5" y="600.5" width="3" height="4" fill="#d62728" stroke="#000" stroke-width="1"/>
<rect x="58.5" y="50.5" width="199" height="66" fill="#fff" stroke="#222" stroke-width="1"/>
<circle cx="58" cy="49" r="4.5" fill="#fff" stroke="#222" stroke-width="1"/>
<rect x="63" y="58" width="8" height="8" fill="#1f77b4"/>
<text x="72" y="66" font-family="Liberation Sans" font-size="12" fill="#333" textLength="178" lengthAdjust="spacing">/dma03_publisher/force/vector/x</text>
<rect x="63" y="79" width="8" height="8" fill="#d62728"/>
<text x="72" y="87" font-family="Liberation Sans" font-size="12" fill="#333" textLength="178" lengthAdjust="spacing">/dma03_publisher/force/vector/y</text>
<rect x="63" y="100" width="8" height="8" fill="#1ac938"/>
<text x="72" y="108" font-family="Liberation Sans" font-size="12" fill="#333" textLength="177" lengthAdjust="spacing">/dma03_publisher/force/vector/z</text>
<text x="502" y="30" text-anchor="middle" font-family="Liberation Sans" font-size="12" fill="#333">...</text>
<path d="M1068 19.5L1079 30.5M1079 19.5L1068 30.5" stroke="#111" stroke-width="1.8"/></svg>

<!-- bottom -->
<div class="a" style="left:325px;top:915px;width:100px;height:30px;background:#fff;border:1px solid #333"></div>
<div class="t" style="left:358px;top:924px;letter-spacing:-0.25px">0.000</div>
<svg class="a" style="left:433px;top:920px" width="24" height="20" viewBox="0 0 24 20" ><path d="M5.7 6.3A5.4 5.4 0 0 0 8 16.6H16.1A5.4 5.4 0 0 0 16.1 5.8H11.3" fill="none" stroke="#111" stroke-width="2.1"/><path d="M7.8 5.8L11.6 2V9.6Z" fill="#111"/></svg>
<svg class="a" style="left:471px;top:920px" width="17" height="20"><path d="M1 1L16 10L1 19Z" fill="#111"/></svg>
<div class="a" style="left:503px;top:924px;width:662px;height:11px;background:#fff;border:1px solid #2c3e50;border-radius:5px"></div>
<div class="a" style="left:499px;top:922px;width:11px;height:16px;background:#9a9a9a;border:1px solid #2c3e50;border-radius:4px"></div>
<div class="t" style="left:1175px;top:923px;font-weight:bold;color:#111;letter-spacing:-0.42px">Speed:</div>
<div class="box" style="left:1223px;top:915px;width:56px;height:30px"></div>
<div class="t" style="left:1231px;top:924px;letter-spacing:-0.5px">1.0</div>
<div class="t" style="left:1285px;top:923px;font-weight:bold;color:#111;letter-spacing:-0.29px">Step size:</div>
<div class="box" style="left:1349px;top:915px;width:71px;height:30px"></div>
<div class="t" style="left:1356px;top:924px;letter-spacing:-0.18px">0.000</div>
<div class="a" style="left:292px;top:270px;width:1px;height:28px;background:#333"></div>
<div class="a" style="left:292px;top:283px;width:16px;height:2px;background:#333"></div>
<svg class="a" style="left:294px;top:273px" width="12" height="22" viewBox="0 0 12 22" ><path d="M1 5.8L6 0.6L11 5.8Z" fill="#888"/><path d="M1 15.9L6 21.1L11 15.9Z" fill="#888"/></svg>
<div class="a" style="left:1263px;top:916px;width:1px;height:28px;background:#333"></div>
<div class="a" style="left:1263px;top:929px;width:16px;height:2px;background:#333"></div>
<svg class="a" style="left:1265px;top:919px" width="12" height="22" viewBox="0 0 12 22" ><path d="M1 5.8L6 0.6L11 5.8Z" fill="#888"/><path d="M1 15.9L6 21.1L11 15.9Z" fill="#888"/></svg>
<div class="a" style="left:1404px;top:916px;width:1px;height:28px;background:#333"></div>
<div class="a" style="left:1404px;top:929px;width:16px;height:2px;background:#333"></div>
<svg class="a" style="left:1406px;top:919px" width="12" height="22" viewBox="0 0 12 22" ><path d="M1 5.8L6 0.6L11 5.8Z" fill="#888"/><path d="M1 15.9L6 21.1L11 15.9Z" fill="#888"/></svg>
</body></html>
